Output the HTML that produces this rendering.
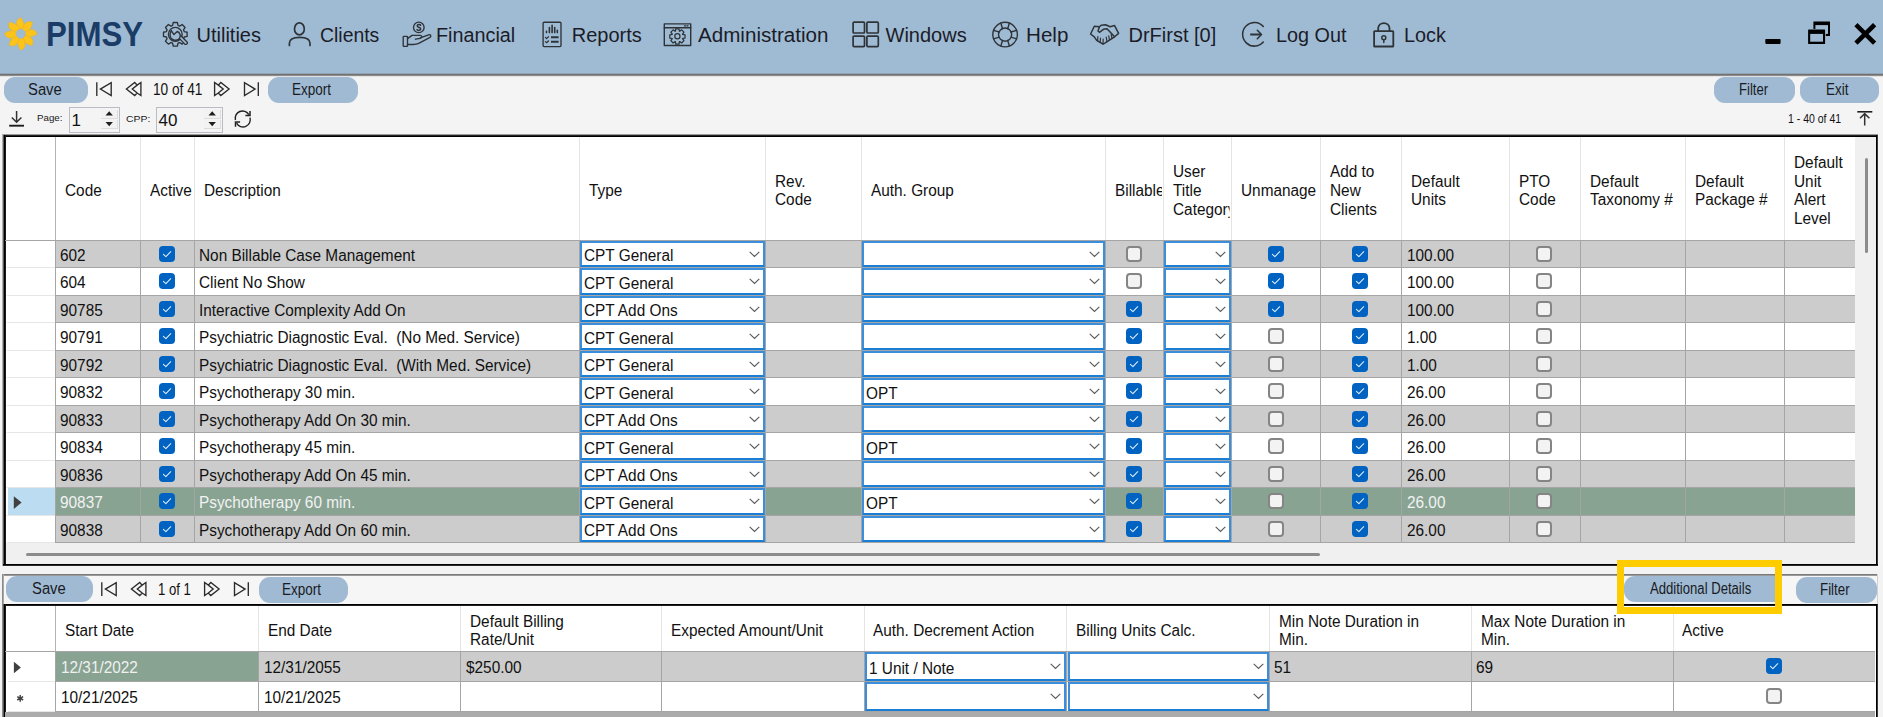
<!DOCTYPE html><html><head><meta charset="utf-8"><style>
html,body{margin:0;padding:0;}
body{width:1883px;height:717px;overflow:hidden;position:relative;background:#f4f4f4;font-family:"Liberation Sans",sans-serif;color:#000;}
div{position:absolute;box-sizing:border-box;}
.t{white-space:pre;}
</style></head><body>
<div style="left:0px;top:0px;width:1883px;height:74px;background:#9fbbd3"></div>
<div style="left:0px;top:73px;width:1883px;height:1px;background:#93a6b8"></div>
<div style="left:0px;top:74px;width:1883px;height:1px;background:#717171"></div>
<div style="left:0px;top:75px;width:1883px;height:1px;background:#8c8c8c"></div>
<div style="left:0px;top:76px;width:1883px;height:1px;background:#e2e2e2"></div>
<svg style="position:absolute;left:0px;top:14px;overflow:visible" width="42" height="40" viewBox="0 14 42 40"><g transform="translate(20.8,33.8)" fill="#fcc31b" stroke="#dcae3a" stroke-width="0.45" stroke-linejoin="round"><path d="M0.3,-16.4 C2.4,-13.4 3.9,-9.2 3.7,-4.6 L-1.9,-4.4 C-4.2,-7.2 -4.9,-10.6 -4.1,-12.6 C-3.2,-14.6 -1.4,-15.8 0.3,-16.4 Z" transform="rotate(0)"/><path d="M0.3,-16.4 C2.4,-13.4 3.9,-9.2 3.7,-4.6 L-1.9,-4.4 C-4.2,-7.2 -4.9,-10.6 -4.1,-12.6 C-3.2,-14.6 -1.4,-15.8 0.3,-16.4 Z" transform="rotate(45)"/><path d="M0.3,-16.4 C2.4,-13.4 3.9,-9.2 3.7,-4.6 L-1.9,-4.4 C-4.2,-7.2 -4.9,-10.6 -4.1,-12.6 C-3.2,-14.6 -1.4,-15.8 0.3,-16.4 Z" transform="rotate(90)"/><path d="M0.3,-16.4 C2.4,-13.4 3.9,-9.2 3.7,-4.6 L-1.9,-4.4 C-4.2,-7.2 -4.9,-10.6 -4.1,-12.6 C-3.2,-14.6 -1.4,-15.8 0.3,-16.4 Z" transform="rotate(135)"/><path d="M0.3,-16.4 C2.4,-13.4 3.9,-9.2 3.7,-4.6 L-1.9,-4.4 C-4.2,-7.2 -4.9,-10.6 -4.1,-12.6 C-3.2,-14.6 -1.4,-15.8 0.3,-16.4 Z" transform="rotate(180)"/><path d="M0.3,-16.4 C2.4,-13.4 3.9,-9.2 3.7,-4.6 L-1.9,-4.4 C-4.2,-7.2 -4.9,-10.6 -4.1,-12.6 C-3.2,-14.6 -1.4,-15.8 0.3,-16.4 Z" transform="rotate(225)"/><path d="M0.3,-16.4 C2.4,-13.4 3.9,-9.2 3.7,-4.6 L-1.9,-4.4 C-4.2,-7.2 -4.9,-10.6 -4.1,-12.6 C-3.2,-14.6 -1.4,-15.8 0.3,-16.4 Z" transform="rotate(270)"/><path d="M0.3,-16.4 C2.4,-13.4 3.9,-9.2 3.7,-4.6 L-1.9,-4.4 C-4.2,-7.2 -4.9,-10.6 -4.1,-12.6 C-3.2,-14.6 -1.4,-15.8 0.3,-16.4 Z" transform="rotate(315)"/></g><circle cx="20.8" cy="33.8" r="4.6" fill="#9fbbd3"/></svg>
<div class="t" style="left:45.5px;top:16.80px;font-size:34.5px;line-height:34.5px;font-weight:bold;color:#1b3c66;transform:scaleX(0.905);transform-origin:0 0">PIMSY</div>
<div class="t" style="left:196.5px;top:25.37px;font-size:20px;line-height:20px;color:#1c1c28;transform:scaleX(1.0);transform-origin:0 0">Utilities</div>
<div class="t" style="left:319.5px;top:25.37px;font-size:20px;line-height:20px;color:#1c1c28;transform:scaleX(0.97);transform-origin:0 0">Clients</div>
<div class="t" style="left:436.4px;top:25.37px;font-size:20px;line-height:20px;color:#1c1c28;transform:scaleX(0.99);transform-origin:0 0">Financial</div>
<div class="t" style="left:571.8px;top:25.37px;font-size:20px;line-height:20px;color:#1c1c28;transform:scaleX(1.0);transform-origin:0 0">Reports</div>
<div class="t" style="left:698.2px;top:25.37px;font-size:20px;line-height:20px;color:#1c1c28;transform:scaleX(1.03);transform-origin:0 0">Administration</div>
<div class="t" style="left:885.5px;top:25.37px;font-size:20px;line-height:20px;color:#1c1c28;transform:scaleX(1.0);transform-origin:0 0">Windows</div>
<div class="t" style="left:1025.5px;top:25.37px;font-size:20px;line-height:20px;color:#1c1c28;transform:scaleX(1.03);transform-origin:0 0">Help</div>
<div class="t" style="left:1128.5px;top:25.37px;font-size:20px;line-height:20px;color:#1c1c28;transform:scaleX(1.0);transform-origin:0 0">DrFirst [0]</div>
<div class="t" style="left:1275.5px;top:25.37px;font-size:20px;line-height:20px;color:#1c1c28;transform:scaleX(0.99);transform-origin:0 0">Log Out</div>
<div class="t" style="left:1404px;top:25.37px;font-size:20px;line-height:20px;color:#1c1c28;transform:scaleX(0.99);transform-origin:0 0">Lock</div>
<svg style="position:absolute;left:160px;top:20px;overflow:visible" width="32" height="30" viewBox="160 20 32 30"><g fill="none" stroke="#2e3338" stroke-linecap="round" stroke-linejoin="round" stroke-width="1.35"><path d="M172.58,25.41 L173.22,22.48 L177.38,22.48 L178.02,25.41 L179.67,26.09 L182.18,24.47 L185.13,27.42 L183.51,29.93 L184.19,31.58 L187.12,32.22 L187.12,36.38 L184.19,37.02 L183.51,38.67 L185.13,41.18 L182.18,44.13 L179.67,42.51 L178.02,43.19 L177.38,46.12 L173.22,46.12 L172.58,43.19 L170.93,42.51 L168.42,44.13 L165.47,41.18 L167.09,38.67 L166.41,37.02 L163.48,36.38 L163.48,32.22 L166.41,31.58 L167.09,29.93 L165.47,27.42 L168.42,24.47 L170.93,26.09 Z"/><circle cx="175.3" cy="34.3" r="6.9"/><path d="M178.6,37.6 L184.6,43.9 C185.4,44.7 186.9,44.6 187.3,43.6 C187.6,42.9 187.3,42.2 186.8,41.7 L180.6,35.5" fill="#9fbbd3"/><path d="M171.3,30.6 L173.9,34.6 L177.3,31.4 C179.6,32.8 180.6,35.2 180,37.1 C179.2,39.4 176.8,40.5 174.5,40.1 C171.8,39.6 169.9,37.2 170.1,34.5 C170.2,32.9 170.6,31.7 171.3,30.6 Z" fill="#9fbbd3"/></g></svg>
<svg style="position:absolute;left:284px;top:18px;overflow:visible" width="32" height="32" viewBox="284 18 32 32"><g fill="none" stroke="#2e3338" stroke-linecap="round" stroke-linejoin="round" stroke-width="1.7"><ellipse cx="299.4" cy="28.9" rx="4.9" ry="6"/><path d="M289.4,45.5 V43.3 C289.4,39.6 293.5,37.4 299.7,37.4 C305.9,37.4 310,39.6 310,43.3 V45.5"/></g></svg>
<svg style="position:absolute;left:398px;top:16px;overflow:visible" width="38" height="36" viewBox="398 16 38 36"><g fill="none" stroke="#2e3338" stroke-linecap="round" stroke-linejoin="round" stroke-width="1.35"><circle cx="418.8" cy="27.4" r="5.3"/><path d="M420.6,25.3 C420.2,24.2 417.4,24.2 417.2,25.9 C417,27.4 420.7,27.2 420.7,29 C420.7,30.6 417.7,30.8 417,29.6" stroke-width="1.5"/><rect x="403.2" y="36.4" width="4.3" height="9.9" rx="0.6"/><path d="M407.5,38.6 L412,35.4 H420.3 C422.2,35.6 422.2,38 420.3,38.3 L415.4,39.2 M420.2,37.8 L428.6,34.8 C430.8,34.1 431.6,36.5 430,37.4 L419.2,43.2 C417.2,44.2 415.1,44.5 413,44.5 H407.5"/></g></svg>
<svg style="position:absolute;left:538px;top:18px;overflow:visible" width="28" height="32" viewBox="538 18 28 32"><g fill="none" stroke="#2e3338" stroke-linecap="round" stroke-linejoin="round" stroke-width="1.35"><rect x="543.1" y="22.2" width="17.9" height="24.4" rx="1"/><path d="M546.5,31.3 V32.6 M549.4,27.6 V32.6 M552.1,25.3 V32.6 M554.7,27.6 V32.6 M557.3,30.2 V32.6" stroke-width="1.6"/><path d="M545.4,37.4 L546.6,38.5 L548.6,36.6 M545.4,41.6 L546.6,42.7 L548.6,40.8" stroke-width="1.2"/><path d="M551,37.3 H558.6 M551,41.8 H558.6" stroke-width="2" stroke-linecap="butt"/></g></svg>
<svg style="position:absolute;left:660px;top:18px;overflow:visible" width="36" height="32" viewBox="660 18 36 32"><g fill="none" stroke="#2e3338" stroke-linecap="round" stroke-linejoin="round" stroke-width="1.4" stroke-linecap="butt" stroke-linejoin="miter"><rect x="664.3" y="23.9" width="26.4" height="21.6"/><path d="M664.3,27.7 H690.7"/><path d="M684.3,25.8 H685.6 M686.8,25.8 H688.1" stroke-width="1.2"/></g><g fill="none" stroke="#2e3338" stroke-linecap="round" stroke-linejoin="round" stroke-width="1.25"><path d="M675.39,31.17 L675.78,28.77 L679.02,28.77 L679.41,31.17 L679.68,31.28 L681.65,29.86 L683.94,32.15 L682.52,34.12 L682.63,34.39 L685.03,34.78 L685.03,38.02 L682.63,38.41 L682.52,38.68 L683.94,40.65 L681.65,42.94 L679.68,41.52 L679.41,41.63 L679.02,44.03 L675.78,44.03 L675.39,41.63 L675.12,41.52 L673.15,42.94 L670.86,40.65 L672.28,38.68 L672.17,38.41 L669.77,38.02 L669.77,34.78 L672.17,34.39 L672.28,34.12 L670.86,32.15 L673.15,29.86 L675.12,31.28 Z"/><circle cx="677.4" cy="36.3" r="2.6"/></g></svg>
<svg style="position:absolute;left:848px;top:18px;overflow:visible" width="36" height="32" viewBox="848 18 36 32"><g fill="none" stroke="#2e3338" stroke-linecap="round" stroke-linejoin="round" stroke-width="1.7"><rect x="853.1" y="22.2" width="11.4" height="10.8" rx="1"/><rect x="866.9" y="22.2" width="11.4" height="10.8" rx="1"/><rect x="853.1" y="36.1" width="11.4" height="10.5" rx="1"/><rect x="866.9" y="36.1" width="11.4" height="10.5" rx="1"/></g></svg>
<svg style="position:absolute;left:986px;top:16px;overflow:visible" width="38" height="36" viewBox="986 16 38 36"><g fill="none" stroke="#2e3338" stroke-linecap="round" stroke-linejoin="round" stroke-width="1.4"><circle cx="1005.1" cy="34.6" r="12.3"/><circle cx="1005.1" cy="34.6" r="6.6"/><path d="M1002.50,28.75 L1000.81,23.07 M1007.70,28.75 L1009.39,23.07 M1010.95,32.00 L1016.63,30.31 M1010.95,37.20 L1016.63,38.89 M1007.70,40.45 L1009.39,46.13 M1002.50,40.45 L1000.81,46.13 M999.25,37.20 L993.57,38.89 M999.25,32.00 L993.57,30.31 "/></g></svg>
<svg style="position:absolute;left:1086px;top:18px;overflow:visible" width="38" height="32" viewBox="1086 18 38 32"><g fill="none" stroke="#2e3338" stroke-linecap="round" stroke-linejoin="round" stroke-width="1.5"><path d="M1090.6,34 L1094.3,26.3 L1099.4,26.8 L1101.2,25.2 L1105.6,24.8 L1110.1,26.7 L1114.6,25.6 L1118.6,33.4 L1114.6,36.8 L1104.8,43.1 L1103,44.2 L1096.7,40.3 L1094.3,36.8 Z"/><path d="M1099.4,26.8 L1098,31 L1099.4,32.3 L1103.4,29.3 L1107,28.8 L1114.6,36.8"/><path d="M1106.2,37.2 L1107,41.6 M1108.7,35.8 L1109.5,40 M1111.2,34.4 L1112,38.4 M1097.9,36.6 L1097.6,40.8 M1100.5,38.2 L1100.2,42.4 M1103.2,39.2 L1103,43.6" stroke-width="1.2"/></g></svg>
<svg style="position:absolute;left:1238px;top:16px;overflow:visible" width="34" height="36" viewBox="1238 16 34 36"><g fill="none" stroke="#2e3338" stroke-linecap="round" stroke-linejoin="round" stroke-width="1.55"><path d="M1263.3,26.5 A11.8,11.8 0 1 0 1263.3,42.1"/><path d="M1250.2,34.5 H1261" stroke-width="2" stroke-linecap="butt"/><path d="M1257.3,30.3 L1261.5,34.5 L1257.3,38.8"/></g></svg>
<svg style="position:absolute;left:1368px;top:16px;overflow:visible" width="32" height="36" viewBox="1368 16 32 36"><g fill="none" stroke="#2e3338" stroke-linecap="round" stroke-linejoin="round" stroke-width="1.8" stroke-linejoin="miter"><rect x="1374.1" y="31.2" width="19.2" height="15.3" rx="0.6"/><path d="M1378.2,31.2 V28 A5.7,5.7 0 0 1 1389.5,28 V31.2"/><circle cx="1383.8" cy="37.7" r="2" stroke-width="1.5"/><path d="M1383.8,40.2 V42.4" stroke-width="1.5"/></g></svg>
<svg style="position:absolute;left:1758px;top:16px;overflow:visible" width="125" height="36" viewBox="1758 16 125 36"><rect x="1765.3" y="38.9" width="15.3" height="5" rx="0.8" fill="#000"/><rect x="1813.4" y="21.6" width="16.6" height="14.3" rx="0.5" fill="#000"/><rect x="1815.4" y="25.1" width="12.6" height="8.8" fill="#9fbbd3"/><rect x="1807.2" y="28.9" width="18.6" height="15.6" fill="#9fbbd3"/><rect x="1808.1" y="29.6" width="17" height="14.3" rx="0.5" fill="#000"/><rect x="1810.2" y="33.9" width="12.8" height="7.8" fill="#9fbbd3"/><path d="M1857.6,26.3 L1873,41.6 M1873,26.3 L1857.6,41.6" stroke="#000" stroke-width="4.6" stroke-linecap="square"/></svg>
<div style="left:4px;top:77px;width:84px;height:26px;background:#9fbad2;border-radius:11px"></div>
<div class="t" style="left:28.3px;top:82.46px;font-size:16px;line-height:16px;color:#1a1a24;transform:scaleX(0.926);transform-origin:0 0">Save</div>
<div style="left:268px;top:77px;width:90px;height:26px;background:#9fbad2;border-radius:11px"></div>
<div class="t" style="left:291.6px;top:82.46px;font-size:16px;line-height:16px;color:#1a1a24;transform:scaleX(0.843);transform-origin:0 0">Export</div>
<div style="left:1714px;top:77px;width:81px;height:26px;background:#9fbad2;border-radius:11px"></div>
<div class="t" style="left:1739.3px;top:82.46px;font-size:16px;line-height:16px;color:#1a1a24;transform:scaleX(0.82);transform-origin:0 0">Filter</div>
<div style="left:1800px;top:77px;width:79px;height:26px;background:#9fbad2;border-radius:11px"></div>
<div class="t" style="left:1826.2px;top:82.46px;font-size:16px;line-height:16px;color:#1a1a24;transform:scaleX(0.84);transform-origin:0 0">Exit</div>
<svg style="position:absolute;left:90px;top:78px;overflow:visible" width="60" height="22" viewBox="90 78 60 22"><g fill="none" stroke="#2b2b2b" stroke-width="1.35" stroke-linejoin="miter" transform="translate(0,0)"><path d="M96.8,82.3 V95.9"/><path d="M111.2,82.7 V95.6 L100.4,89.1 Z"/><path d="M126.4,89 L134.7,82.5 L137.2,85.1 L140.9,82.5 V95.5 L137.2,93 L134.7,95.5 Z M137.2,85.1 L132.3,89 L137.2,93"/></g></svg>
<svg style="position:absolute;left:208px;top:78px;overflow:visible" width="56" height="22" viewBox="208 78 56 22"><g fill="none" stroke="#2b2b2b" stroke-width="1.35" stroke-linejoin="miter" transform="translate(0,0)"><path d="M229.1,89 L220.8,82.5 L218.3,85.1 L214.6,82.5 V95.5 L218.3,93 L220.8,95.5 Z M218.3,85.1 L223.2,89 L218.3,93"/><path d="M244.5,82.7 V95.6 L255.1,89.1 Z"/><path d="M258.3,82.3 V95.9"/></g></svg>
<div class="t" style="left:152.8px;top:82.36px;font-size:16px;line-height:16px;transform:scaleX(0.854);transform-origin:0 0;color:#111">10 of 41</div>
<svg style="position:absolute;left:0px;top:104px;overflow:visible" width="30" height="30" viewBox="0 104 30 30"><g fill="none" stroke="#1e1e1e" stroke-width="1.5"><path d="M16.6,111 V122.3 M11.8,117.4 L16.6,122.3 L21.4,117.4" stroke="#333"/><path d="M9.2,125.7 H24" stroke-width="1.9"/></g></svg>
<div class="t" style="left:37.4px;top:113.68px;font-size:9px;line-height:9px;color:#1a1a1a;transform:scaleX(1.08);transform-origin:0 0">Page:</div>
<div style="left:69px;top:107px;width:51px;height:26px;background:#f4f4f4;border:1px solid #b9bdc3"></div>
<div style="left:101px;top:109.5px;width:17px;height:9px;background:#f2f2f2;border-right:1px solid #dcdcdc;border-bottom:1px solid #dcdcdc"></div>
<div style="left:101px;top:119.5px;width:17px;height:9.5px;background:#f2f2f2;border-right:1px solid #dcdcdc;border-bottom:1px solid #dcdcdc"></div>
<svg style="position:absolute;left:101px;top:107px;overflow:visible" width="17" height="26" viewBox="101 107 17 26"><path d="M105.5,115.5 L109.2,111.3 L112.9,115.5 Z M105.5,122 L109.2,126.2 L112.9,122 Z" fill="#1e1e1e"/></svg>
<div class="t" style="left:71.5px;top:111.61px;font-size:17px;line-height:17px;color:#111">1</div>
<div class="t" style="left:126.3px;top:113.86px;font-size:9.5px;line-height:9.5px;color:#1a1a1a;transform:scaleX(1.1);transform-origin:0 0">CPP:</div>
<div style="left:156px;top:107px;width:67px;height:26px;background:#f4f4f4;border:1px solid #b9bdc3"></div>
<div style="left:204px;top:109.5px;width:17px;height:9px;background:#f2f2f2;border-right:1px solid #dcdcdc;border-bottom:1px solid #dcdcdc"></div>
<div style="left:204px;top:119.5px;width:17px;height:9.5px;background:#f2f2f2;border-right:1px solid #dcdcdc;border-bottom:1px solid #dcdcdc"></div>
<svg style="position:absolute;left:204px;top:107px;overflow:visible" width="17" height="26" viewBox="204 107 17 26"><path d="M208.5,115.5 L212.2,111.3 L215.9,115.5 Z M208.5,122 L212.2,126.2 L215.9,122 Z" fill="#1e1e1e"/></svg>
<div class="t" style="left:158.5px;top:111.61px;font-size:17px;line-height:17px;color:#111">40</div>
<svg style="position:absolute;left:230px;top:106px;overflow:visible" width="26" height="26" viewBox="230 106 26 26"><g fill="none" stroke="#222" stroke-width="1.4"><path d="M235.4,120 A7.3,7.3 0 0 1 248.8,114.6 M250,117.6 A7.3,7.3 0 0 1 236.6,123.2"/><path d="M250,110.9 V115.6 H245.4 M235.5,126.8 V122.1 H240.1" stroke-width="1.5"/></g></svg>
<div class="t" style="left:1787.9px;top:113.24px;font-size:12px;line-height:12px;color:#111;transform:scaleX(0.875);transform-origin:0 0">1 - 40 of 41</div>
<svg style="position:absolute;left:1850px;top:104px;overflow:visible" width="30" height="28" viewBox="1850 104 30 28"><g fill="none" stroke="#1e1e1e" stroke-width="1.5"><path d="M1857.3,111.8 H1872.3" stroke-width="1.6"/><path d="M1864.7,114 V125.6 M1860,118.3 L1864.7,113.6 L1869.4,118.3" stroke="#333"/></g></svg>
<div style="left:2px;top:134px;width:1876px;height:1px;background:#9a9a9a"></div>
<div style="left:2px;top:134px;width:1px;height:432px;background:#b0b0b0"></div>
<div style="left:3px;top:135px;width:1875px;height:1px;background:#222"></div>
<div style="left:3px;top:136px;width:1875px;height:1px;background:#000"></div>
<div style="left:3px;top:135px;width:1px;height:431px;background:#5a5a5a"></div>
<div style="left:4px;top:135px;width:1px;height:431px;background:#000"></div>
<div style="left:5px;top:135px;width:1px;height:431px;background:#1a1a1a"></div>
<div style="left:1876px;top:135px;width:1px;height:431px;background:#000"></div>
<div style="left:1877px;top:135px;width:1px;height:431px;background:#3a3a3a"></div>
<div style="left:3px;top:564px;width:1875px;height:1px;background:#000"></div>
<div style="left:3px;top:565px;width:1875px;height:1px;background:#2a2a2a"></div>
<div style="left:6px;top:137px;width:1870px;height:427px;background:#f0f0f0"></div>
<div style="left:6px;top:137px;width:1849px;height:103px;background:#fff"></div>
<div style="left:55px;top:137px;width:1px;height:103px;background:#b4b4b4"></div>
<div style="left:140px;top:137px;width:1px;height:103px;background:#e4e4e4"></div>
<div style="left:194px;top:137px;width:1px;height:103px;background:#e4e4e4"></div>
<div style="left:579px;top:137px;width:1px;height:103px;background:#e4e4e4"></div>
<div style="left:765px;top:137px;width:1px;height:103px;background:#e4e4e4"></div>
<div style="left:861px;top:137px;width:1px;height:103px;background:#e4e4e4"></div>
<div style="left:1105px;top:137px;width:1px;height:103px;background:#e4e4e4"></div>
<div style="left:1163px;top:137px;width:1px;height:103px;background:#e4e4e4"></div>
<div style="left:1231px;top:137px;width:1px;height:103px;background:#e4e4e4"></div>
<div style="left:1320px;top:137px;width:1px;height:103px;background:#e4e4e4"></div>
<div style="left:1401px;top:137px;width:1px;height:103px;background:#e4e4e4"></div>
<div style="left:1509px;top:137px;width:1px;height:103px;background:#e4e4e4"></div>
<div style="left:1580px;top:137px;width:1px;height:103px;background:#e4e4e4"></div>
<div style="left:1685px;top:137px;width:1px;height:103px;background:#e4e4e4"></div>
<div style="left:1784px;top:137px;width:1px;height:103px;background:#e4e4e4"></div>
<div style="left:5px;top:240px;width:1850px;height:1px;background:#a5a5a5"></div>
<div class="t" style="left:65px;top:180.85px;width:77.08333333333334px;height:19px;overflow:hidden;font-size:16px;line-height:19px;color:#111;transform:scaleX(0.96);transform-origin:0 0">Code</div>
<div class="t" style="left:150px;top:180.85px;width:44.79166666666667px;height:19px;overflow:hidden;font-size:16px;line-height:19px;color:#111;transform:scaleX(0.96);transform-origin:0 0">Active</div>
<div class="t" style="left:204px;top:180.85px;width:389.58333333333337px;height:19px;overflow:hidden;font-size:16px;line-height:19px;color:#111;transform:scaleX(0.96);transform-origin:0 0">Description</div>
<div class="t" style="left:589px;top:180.85px;width:182.29166666666669px;height:19px;overflow:hidden;font-size:16px;line-height:19px;color:#111;transform:scaleX(0.96);transform-origin:0 0">Type</div>
<div class="t" style="left:775px;top:171.53px;width:88.54166666666667px;height:19px;overflow:hidden;font-size:16px;line-height:19px;color:#111;transform:scaleX(0.96);transform-origin:0 0">Rev.</div>
<div class="t" style="left:775px;top:190.18px;width:88.54166666666667px;height:19px;overflow:hidden;font-size:16px;line-height:19px;color:#111;transform:scaleX(0.96);transform-origin:0 0">Code</div>
<div class="t" style="left:871px;top:180.85px;width:242.70833333333334px;height:19px;overflow:hidden;font-size:16px;line-height:19px;color:#111;transform:scaleX(0.96);transform-origin:0 0">Auth. Group</div>
<div class="t" style="left:1115px;top:180.85px;width:48.958333333333336px;height:19px;overflow:hidden;font-size:16px;line-height:19px;color:#111;transform:scaleX(0.96);transform-origin:0 0">Billable</div>
<div class="t" style="left:1173px;top:162.20px;width:59.375px;height:19px;overflow:hidden;font-size:16px;line-height:19px;color:#111;transform:scaleX(0.96);transform-origin:0 0">User</div>
<div class="t" style="left:1173px;top:180.85px;width:59.375px;height:19px;overflow:hidden;font-size:16px;line-height:19px;color:#111;transform:scaleX(0.96);transform-origin:0 0">Title</div>
<div class="t" style="left:1173px;top:199.50px;width:59.375px;height:19px;overflow:hidden;font-size:16px;line-height:19px;color:#111;transform:scaleX(0.96);transform-origin:0 0">Category</div>
<div class="t" style="left:1241px;top:180.85px;width:81.25px;height:19px;overflow:hidden;font-size:16px;line-height:19px;color:#111;transform:scaleX(0.96);transform-origin:0 0">Unmanage</div>
<div class="t" style="left:1330px;top:162.20px;width:72.91666666666667px;height:19px;overflow:hidden;font-size:16px;line-height:19px;color:#111;transform:scaleX(0.96);transform-origin:0 0">Add to</div>
<div class="t" style="left:1330px;top:180.85px;width:72.91666666666667px;height:19px;overflow:hidden;font-size:16px;line-height:19px;color:#111;transform:scaleX(0.96);transform-origin:0 0">New</div>
<div class="t" style="left:1330px;top:199.50px;width:72.91666666666667px;height:19px;overflow:hidden;font-size:16px;line-height:19px;color:#111;transform:scaleX(0.96);transform-origin:0 0">Clients</div>
<div class="t" style="left:1411px;top:171.53px;width:101.04166666666667px;height:19px;overflow:hidden;font-size:16px;line-height:19px;color:#111;transform:scaleX(0.96);transform-origin:0 0">Default</div>
<div class="t" style="left:1411px;top:190.18px;width:101.04166666666667px;height:19px;overflow:hidden;font-size:16px;line-height:19px;color:#111;transform:scaleX(0.96);transform-origin:0 0">Units</div>
<div class="t" style="left:1519px;top:171.53px;width:62.5px;height:19px;overflow:hidden;font-size:16px;line-height:19px;color:#111;transform:scaleX(0.96);transform-origin:0 0">PTO</div>
<div class="t" style="left:1519px;top:190.18px;width:62.5px;height:19px;overflow:hidden;font-size:16px;line-height:19px;color:#111;transform:scaleX(0.96);transform-origin:0 0">Code</div>
<div class="t" style="left:1590px;top:171.53px;width:97.91666666666667px;height:19px;overflow:hidden;font-size:16px;line-height:19px;color:#111;transform:scaleX(0.96);transform-origin:0 0">Default</div>
<div class="t" style="left:1590px;top:190.18px;width:97.91666666666667px;height:19px;overflow:hidden;font-size:16px;line-height:19px;color:#111;transform:scaleX(0.96);transform-origin:0 0">Taxonomy #</div>
<div class="t" style="left:1695px;top:171.53px;width:91.66666666666667px;height:19px;overflow:hidden;font-size:16px;line-height:19px;color:#111;transform:scaleX(0.96);transform-origin:0 0">Default</div>
<div class="t" style="left:1695px;top:190.18px;width:91.66666666666667px;height:19px;overflow:hidden;font-size:16px;line-height:19px;color:#111;transform:scaleX(0.96);transform-origin:0 0">Package #</div>
<div class="t" style="left:1794px;top:152.88px;width:62.5px;height:19px;overflow:hidden;font-size:16px;line-height:19px;color:#111;transform:scaleX(0.96);transform-origin:0 0">Default</div>
<div class="t" style="left:1794px;top:171.53px;width:62.5px;height:19px;overflow:hidden;font-size:16px;line-height:19px;color:#111;transform:scaleX(0.96);transform-origin:0 0">Unit</div>
<div class="t" style="left:1794px;top:190.18px;width:62.5px;height:19px;overflow:hidden;font-size:16px;line-height:19px;color:#111;transform:scaleX(0.96);transform-origin:0 0">Alert</div>
<div class="t" style="left:1794px;top:208.82px;width:62.5px;height:19px;overflow:hidden;font-size:16px;line-height:19px;color:#111;transform:scaleX(0.96);transform-origin:0 0">Level</div>
<div style="left:1864.5px;top:158px;width:3px;height:95px;background:#8c8c8c;border-radius:1.5px"></div>
<div style="left:6px;top:241px;width:49px;height:26px;background:#fff"></div>
<div style="left:8px;top:267px;width:47px;height:1px;background:#e6e6e6"></div>
<div style="left:56px;top:241px;width:1799px;height:26px;background:#cccccc"></div>
<div style="left:55px;top:267px;width:1800px;height:1px;background:#a5a5a5"></div>
<div style="left:55px;top:240px;width:1px;height:28px;background:#a5a5a5"></div>
<div style="left:140px;top:240px;width:1px;height:28px;background:#a5a5a5"></div>
<div style="left:194px;top:240px;width:1px;height:28px;background:#a5a5a5"></div>
<div style="left:579px;top:240px;width:1px;height:28px;background:#a5a5a5"></div>
<div style="left:765px;top:240px;width:1px;height:28px;background:#a5a5a5"></div>
<div style="left:861px;top:240px;width:1px;height:28px;background:#a5a5a5"></div>
<div style="left:1105px;top:240px;width:1px;height:28px;background:#a5a5a5"></div>
<div style="left:1163px;top:240px;width:1px;height:28px;background:#a5a5a5"></div>
<div style="left:1231px;top:240px;width:1px;height:28px;background:#a5a5a5"></div>
<div style="left:1320px;top:240px;width:1px;height:28px;background:#a5a5a5"></div>
<div style="left:1401px;top:240px;width:1px;height:28px;background:#a5a5a5"></div>
<div style="left:1509px;top:240px;width:1px;height:28px;background:#a5a5a5"></div>
<div style="left:1580px;top:240px;width:1px;height:28px;background:#a5a5a5"></div>
<div style="left:1685px;top:240px;width:1px;height:28px;background:#a5a5a5"></div>
<div style="left:1784px;top:240px;width:1px;height:28px;background:#a5a5a5"></div>
<div class="t" style="left:60px;top:248.46px;font-size:16px;line-height:16px;transform:scaleX(0.96);transform-origin:0 0;color:#111">602</div>
<div style="left:159px;top:246px;width:16px;height:16px;background:#0063c1;border-radius:4px"></div>
<svg style="position:absolute;left:159px;top:246px;" width="16" height="16" viewBox="0 0 16 16"><path d="M4.4,8.3 L6.9,10.7 L11.7,5.7" fill="none" stroke="#e4eef9" stroke-width="1.05" stroke-linecap="round" stroke-linejoin="round"/></svg>
<div class="t" style="left:199px;top:248.46px;font-size:16px;line-height:16px;transform:scaleX(0.96);transform-origin:0 0;color:#111">Non Billable Case Management</div>
<div style="left:580px;top:241px;width:185px;height:26px;background:#fff;border:2px solid #3a8edb;border-bottom-color:#1a7fd4"></div>
<div class="t" style="left:584px;top:248.46px;font-size:16px;line-height:16px;transform:scaleX(0.96);transform-origin:0 0;color:#111">CPT General</div>
<svg style="position:absolute;left:749px;top:251.0px;" width="11" height="7" viewBox="0 0 11 7"><path d="M0.7,0.9 L5.5,5.5 L10.3,0.9" fill="none" stroke="#5c5c5c" stroke-width="1.2"/></svg>
<div style="left:862px;top:241px;width:243px;height:26px;background:#fff;border:2px solid #3a8edb;border-bottom-color:#1a7fd4"></div>
<svg style="position:absolute;left:1089px;top:251.0px;" width="11" height="7" viewBox="0 0 11 7"><path d="M0.7,0.9 L5.5,5.5 L10.3,0.9" fill="none" stroke="#5c5c5c" stroke-width="1.2"/></svg>
<div style="left:1126px;top:246px;width:16px;height:16px;background:#f3f3f3;border:2px solid #858585;border-radius:4px"></div>
<div style="left:1164px;top:241px;width:67px;height:26px;background:#fff;border:2px solid #3a8edb;border-bottom-color:#1a7fd4"></div>
<svg style="position:absolute;left:1215px;top:251.0px;" width="11" height="7" viewBox="0 0 11 7"><path d="M0.7,0.9 L5.5,5.5 L10.3,0.9" fill="none" stroke="#5c5c5c" stroke-width="1.2"/></svg>
<div style="left:1268px;top:246px;width:16px;height:16px;background:#0063c1;border-radius:4px"></div>
<svg style="position:absolute;left:1268px;top:246px;" width="16" height="16" viewBox="0 0 16 16"><path d="M4.4,8.3 L6.9,10.7 L11.7,5.7" fill="none" stroke="#e4eef9" stroke-width="1.05" stroke-linecap="round" stroke-linejoin="round"/></svg>
<div style="left:1352px;top:246px;width:16px;height:16px;background:#0063c1;border-radius:4px"></div>
<svg style="position:absolute;left:1352px;top:246px;" width="16" height="16" viewBox="0 0 16 16"><path d="M4.4,8.3 L6.9,10.7 L11.7,5.7" fill="none" stroke="#e4eef9" stroke-width="1.05" stroke-linecap="round" stroke-linejoin="round"/></svg>
<div class="t" style="left:1407px;top:248.46px;font-size:16px;line-height:16px;transform:scaleX(0.96);transform-origin:0 0;color:#111">100.00</div>
<div style="left:1536px;top:246px;width:16px;height:16px;background:#f3f3f3;border:2px solid #858585;border-radius:4px"></div>
<div style="left:6px;top:268px;width:49px;height:27px;background:#fff"></div>
<div style="left:8px;top:295px;width:47px;height:1px;background:#e6e6e6"></div>
<div style="left:56px;top:268px;width:1799px;height:27px;background:#ffffff"></div>
<div style="left:55px;top:295px;width:1800px;height:1px;background:#a5a5a5"></div>
<div style="left:55px;top:267px;width:1px;height:29px;background:#a5a5a5"></div>
<div style="left:140px;top:267px;width:1px;height:29px;background:#a5a5a5"></div>
<div style="left:194px;top:267px;width:1px;height:29px;background:#a5a5a5"></div>
<div style="left:579px;top:267px;width:1px;height:29px;background:#a5a5a5"></div>
<div style="left:765px;top:267px;width:1px;height:29px;background:#a5a5a5"></div>
<div style="left:861px;top:267px;width:1px;height:29px;background:#a5a5a5"></div>
<div style="left:1105px;top:267px;width:1px;height:29px;background:#a5a5a5"></div>
<div style="left:1163px;top:267px;width:1px;height:29px;background:#a5a5a5"></div>
<div style="left:1231px;top:267px;width:1px;height:29px;background:#a5a5a5"></div>
<div style="left:1320px;top:267px;width:1px;height:29px;background:#a5a5a5"></div>
<div style="left:1401px;top:267px;width:1px;height:29px;background:#a5a5a5"></div>
<div style="left:1509px;top:267px;width:1px;height:29px;background:#a5a5a5"></div>
<div style="left:1580px;top:267px;width:1px;height:29px;background:#a5a5a5"></div>
<div style="left:1685px;top:267px;width:1px;height:29px;background:#a5a5a5"></div>
<div style="left:1784px;top:267px;width:1px;height:29px;background:#a5a5a5"></div>
<div class="t" style="left:60px;top:275.46px;font-size:16px;line-height:16px;transform:scaleX(0.96);transform-origin:0 0;color:#111">604</div>
<div style="left:159px;top:273px;width:16px;height:16px;background:#0063c1;border-radius:4px"></div>
<svg style="position:absolute;left:159px;top:273px;" width="16" height="16" viewBox="0 0 16 16"><path d="M4.4,8.3 L6.9,10.7 L11.7,5.7" fill="none" stroke="#e4eef9" stroke-width="1.05" stroke-linecap="round" stroke-linejoin="round"/></svg>
<div class="t" style="left:199px;top:275.46px;font-size:16px;line-height:16px;transform:scaleX(0.96);transform-origin:0 0;color:#111">Client No Show</div>
<div style="left:580px;top:268px;width:185px;height:27px;background:#fff;border:2px solid #3a8edb;border-bottom-color:#1a7fd4"></div>
<div class="t" style="left:584px;top:275.96px;font-size:16px;line-height:16px;transform:scaleX(0.96);transform-origin:0 0;color:#111">CPT General</div>
<svg style="position:absolute;left:749px;top:278.42px;" width="11" height="7" viewBox="0 0 11 7"><path d="M0.7,0.9 L5.5,5.5 L10.3,0.9" fill="none" stroke="#5c5c5c" stroke-width="1.2"/></svg>
<div style="left:862px;top:268px;width:243px;height:27px;background:#fff;border:2px solid #3a8edb;border-bottom-color:#1a7fd4"></div>
<svg style="position:absolute;left:1089px;top:278.42px;" width="11" height="7" viewBox="0 0 11 7"><path d="M0.7,0.9 L5.5,5.5 L10.3,0.9" fill="none" stroke="#5c5c5c" stroke-width="1.2"/></svg>
<div style="left:1126px;top:273px;width:16px;height:16px;background:#f3f3f3;border:2px solid #858585;border-radius:4px"></div>
<div style="left:1164px;top:268px;width:67px;height:27px;background:#fff;border:2px solid #3a8edb;border-bottom-color:#1a7fd4"></div>
<svg style="position:absolute;left:1215px;top:278.42px;" width="11" height="7" viewBox="0 0 11 7"><path d="M0.7,0.9 L5.5,5.5 L10.3,0.9" fill="none" stroke="#5c5c5c" stroke-width="1.2"/></svg>
<div style="left:1268px;top:273px;width:16px;height:16px;background:#0063c1;border-radius:4px"></div>
<svg style="position:absolute;left:1268px;top:273px;" width="16" height="16" viewBox="0 0 16 16"><path d="M4.4,8.3 L6.9,10.7 L11.7,5.7" fill="none" stroke="#e4eef9" stroke-width="1.05" stroke-linecap="round" stroke-linejoin="round"/></svg>
<div style="left:1352px;top:273px;width:16px;height:16px;background:#0063c1;border-radius:4px"></div>
<svg style="position:absolute;left:1352px;top:273px;" width="16" height="16" viewBox="0 0 16 16"><path d="M4.4,8.3 L6.9,10.7 L11.7,5.7" fill="none" stroke="#e4eef9" stroke-width="1.05" stroke-linecap="round" stroke-linejoin="round"/></svg>
<div class="t" style="left:1407px;top:275.46px;font-size:16px;line-height:16px;transform:scaleX(0.96);transform-origin:0 0;color:#111">100.00</div>
<div style="left:1536px;top:273px;width:16px;height:16px;background:#f3f3f3;border:2px solid #858585;border-radius:4px"></div>
<div style="left:6px;top:296px;width:49px;height:26px;background:#fff"></div>
<div style="left:8px;top:322px;width:47px;height:1px;background:#e6e6e6"></div>
<div style="left:56px;top:296px;width:1799px;height:26px;background:#cccccc"></div>
<div style="left:55px;top:322px;width:1800px;height:1px;background:#a5a5a5"></div>
<div style="left:55px;top:295px;width:1px;height:28px;background:#a5a5a5"></div>
<div style="left:140px;top:295px;width:1px;height:28px;background:#a5a5a5"></div>
<div style="left:194px;top:295px;width:1px;height:28px;background:#a5a5a5"></div>
<div style="left:579px;top:295px;width:1px;height:28px;background:#a5a5a5"></div>
<div style="left:765px;top:295px;width:1px;height:28px;background:#a5a5a5"></div>
<div style="left:861px;top:295px;width:1px;height:28px;background:#a5a5a5"></div>
<div style="left:1105px;top:295px;width:1px;height:28px;background:#a5a5a5"></div>
<div style="left:1163px;top:295px;width:1px;height:28px;background:#a5a5a5"></div>
<div style="left:1231px;top:295px;width:1px;height:28px;background:#a5a5a5"></div>
<div style="left:1320px;top:295px;width:1px;height:28px;background:#a5a5a5"></div>
<div style="left:1401px;top:295px;width:1px;height:28px;background:#a5a5a5"></div>
<div style="left:1509px;top:295px;width:1px;height:28px;background:#a5a5a5"></div>
<div style="left:1580px;top:295px;width:1px;height:28px;background:#a5a5a5"></div>
<div style="left:1685px;top:295px;width:1px;height:28px;background:#a5a5a5"></div>
<div style="left:1784px;top:295px;width:1px;height:28px;background:#a5a5a5"></div>
<div class="t" style="left:60px;top:303.46px;font-size:16px;line-height:16px;transform:scaleX(0.96);transform-origin:0 0;color:#111">90785</div>
<div style="left:159px;top:301px;width:16px;height:16px;background:#0063c1;border-radius:4px"></div>
<svg style="position:absolute;left:159px;top:301px;" width="16" height="16" viewBox="0 0 16 16"><path d="M4.4,8.3 L6.9,10.7 L11.7,5.7" fill="none" stroke="#e4eef9" stroke-width="1.05" stroke-linecap="round" stroke-linejoin="round"/></svg>
<div class="t" style="left:199px;top:303.46px;font-size:16px;line-height:16px;transform:scaleX(0.96);transform-origin:0 0;color:#111">Interactive Complexity Add On</div>
<div style="left:580px;top:296px;width:185px;height:26px;background:#fff;border:2px solid #3a8edb;border-bottom-color:#1a7fd4"></div>
<div class="t" style="left:584px;top:303.46px;font-size:16px;line-height:16px;transform:scaleX(0.96);transform-origin:0 0;color:#111">CPT Add Ons</div>
<svg style="position:absolute;left:749px;top:306.0px;" width="11" height="7" viewBox="0 0 11 7"><path d="M0.7,0.9 L5.5,5.5 L10.3,0.9" fill="none" stroke="#5c5c5c" stroke-width="1.2"/></svg>
<div style="left:862px;top:296px;width:243px;height:26px;background:#fff;border:2px solid #3a8edb;border-bottom-color:#1a7fd4"></div>
<svg style="position:absolute;left:1089px;top:306.0px;" width="11" height="7" viewBox="0 0 11 7"><path d="M0.7,0.9 L5.5,5.5 L10.3,0.9" fill="none" stroke="#5c5c5c" stroke-width="1.2"/></svg>
<div style="left:1126px;top:301px;width:16px;height:16px;background:#0063c1;border-radius:4px"></div>
<svg style="position:absolute;left:1126px;top:301px;" width="16" height="16" viewBox="0 0 16 16"><path d="M4.4,8.3 L6.9,10.7 L11.7,5.7" fill="none" stroke="#e4eef9" stroke-width="1.05" stroke-linecap="round" stroke-linejoin="round"/></svg>
<div style="left:1164px;top:296px;width:67px;height:26px;background:#fff;border:2px solid #3a8edb;border-bottom-color:#1a7fd4"></div>
<svg style="position:absolute;left:1215px;top:306.0px;" width="11" height="7" viewBox="0 0 11 7"><path d="M0.7,0.9 L5.5,5.5 L10.3,0.9" fill="none" stroke="#5c5c5c" stroke-width="1.2"/></svg>
<div style="left:1268px;top:301px;width:16px;height:16px;background:#0063c1;border-radius:4px"></div>
<svg style="position:absolute;left:1268px;top:301px;" width="16" height="16" viewBox="0 0 16 16"><path d="M4.4,8.3 L6.9,10.7 L11.7,5.7" fill="none" stroke="#e4eef9" stroke-width="1.05" stroke-linecap="round" stroke-linejoin="round"/></svg>
<div style="left:1352px;top:301px;width:16px;height:16px;background:#0063c1;border-radius:4px"></div>
<svg style="position:absolute;left:1352px;top:301px;" width="16" height="16" viewBox="0 0 16 16"><path d="M4.4,8.3 L6.9,10.7 L11.7,5.7" fill="none" stroke="#e4eef9" stroke-width="1.05" stroke-linecap="round" stroke-linejoin="round"/></svg>
<div class="t" style="left:1407px;top:303.46px;font-size:16px;line-height:16px;transform:scaleX(0.96);transform-origin:0 0;color:#111">100.00</div>
<div style="left:1536px;top:301px;width:16px;height:16px;background:#f3f3f3;border:2px solid #858585;border-radius:4px"></div>
<div style="left:6px;top:323px;width:49px;height:27px;background:#fff"></div>
<div style="left:8px;top:350px;width:47px;height:1px;background:#e6e6e6"></div>
<div style="left:56px;top:323px;width:1799px;height:27px;background:#ffffff"></div>
<div style="left:55px;top:350px;width:1800px;height:1px;background:#a5a5a5"></div>
<div style="left:55px;top:322px;width:1px;height:29px;background:#a5a5a5"></div>
<div style="left:140px;top:322px;width:1px;height:29px;background:#a5a5a5"></div>
<div style="left:194px;top:322px;width:1px;height:29px;background:#a5a5a5"></div>
<div style="left:579px;top:322px;width:1px;height:29px;background:#a5a5a5"></div>
<div style="left:765px;top:322px;width:1px;height:29px;background:#a5a5a5"></div>
<div style="left:861px;top:322px;width:1px;height:29px;background:#a5a5a5"></div>
<div style="left:1105px;top:322px;width:1px;height:29px;background:#a5a5a5"></div>
<div style="left:1163px;top:322px;width:1px;height:29px;background:#a5a5a5"></div>
<div style="left:1231px;top:322px;width:1px;height:29px;background:#a5a5a5"></div>
<div style="left:1320px;top:322px;width:1px;height:29px;background:#a5a5a5"></div>
<div style="left:1401px;top:322px;width:1px;height:29px;background:#a5a5a5"></div>
<div style="left:1509px;top:322px;width:1px;height:29px;background:#a5a5a5"></div>
<div style="left:1580px;top:322px;width:1px;height:29px;background:#a5a5a5"></div>
<div style="left:1685px;top:322px;width:1px;height:29px;background:#a5a5a5"></div>
<div style="left:1784px;top:322px;width:1px;height:29px;background:#a5a5a5"></div>
<div class="t" style="left:60px;top:330.46px;font-size:16px;line-height:16px;transform:scaleX(0.96);transform-origin:0 0;color:#111">90791</div>
<div style="left:159px;top:328px;width:16px;height:16px;background:#0063c1;border-radius:4px"></div>
<svg style="position:absolute;left:159px;top:328px;" width="16" height="16" viewBox="0 0 16 16"><path d="M4.4,8.3 L6.9,10.7 L11.7,5.7" fill="none" stroke="#e4eef9" stroke-width="1.05" stroke-linecap="round" stroke-linejoin="round"/></svg>
<div class="t" style="left:199px;top:330.46px;font-size:16px;line-height:16px;transform:scaleX(0.96);transform-origin:0 0;color:#111">Psychiatric Diagnostic Eval.  (No Med. Service)</div>
<div style="left:580px;top:323px;width:185px;height:27px;background:#fff;border:2px solid #3a8edb;border-bottom-color:#1a7fd4"></div>
<div class="t" style="left:584px;top:330.96px;font-size:16px;line-height:16px;transform:scaleX(0.96);transform-origin:0 0;color:#111">CPT General</div>
<svg style="position:absolute;left:749px;top:333.42px;" width="11" height="7" viewBox="0 0 11 7"><path d="M0.7,0.9 L5.5,5.5 L10.3,0.9" fill="none" stroke="#5c5c5c" stroke-width="1.2"/></svg>
<div style="left:862px;top:323px;width:243px;height:27px;background:#fff;border:2px solid #3a8edb;border-bottom-color:#1a7fd4"></div>
<svg style="position:absolute;left:1089px;top:333.42px;" width="11" height="7" viewBox="0 0 11 7"><path d="M0.7,0.9 L5.5,5.5 L10.3,0.9" fill="none" stroke="#5c5c5c" stroke-width="1.2"/></svg>
<div style="left:1126px;top:328px;width:16px;height:16px;background:#0063c1;border-radius:4px"></div>
<svg style="position:absolute;left:1126px;top:328px;" width="16" height="16" viewBox="0 0 16 16"><path d="M4.4,8.3 L6.9,10.7 L11.7,5.7" fill="none" stroke="#e4eef9" stroke-width="1.05" stroke-linecap="round" stroke-linejoin="round"/></svg>
<div style="left:1164px;top:323px;width:67px;height:27px;background:#fff;border:2px solid #3a8edb;border-bottom-color:#1a7fd4"></div>
<svg style="position:absolute;left:1215px;top:333.42px;" width="11" height="7" viewBox="0 0 11 7"><path d="M0.7,0.9 L5.5,5.5 L10.3,0.9" fill="none" stroke="#5c5c5c" stroke-width="1.2"/></svg>
<div style="left:1268px;top:328px;width:16px;height:16px;background:#f3f3f3;border:2px solid #858585;border-radius:4px"></div>
<div style="left:1352px;top:328px;width:16px;height:16px;background:#0063c1;border-radius:4px"></div>
<svg style="position:absolute;left:1352px;top:328px;" width="16" height="16" viewBox="0 0 16 16"><path d="M4.4,8.3 L6.9,10.7 L11.7,5.7" fill="none" stroke="#e4eef9" stroke-width="1.05" stroke-linecap="round" stroke-linejoin="round"/></svg>
<div class="t" style="left:1407px;top:330.46px;font-size:16px;line-height:16px;transform:scaleX(0.96);transform-origin:0 0;color:#111">1.00</div>
<div style="left:1536px;top:328px;width:16px;height:16px;background:#f3f3f3;border:2px solid #858585;border-radius:4px"></div>
<div style="left:6px;top:351px;width:49px;height:26px;background:#fff"></div>
<div style="left:8px;top:377px;width:47px;height:1px;background:#e6e6e6"></div>
<div style="left:56px;top:351px;width:1799px;height:26px;background:#cccccc"></div>
<div style="left:55px;top:377px;width:1800px;height:1px;background:#a5a5a5"></div>
<div style="left:55px;top:350px;width:1px;height:28px;background:#a5a5a5"></div>
<div style="left:140px;top:350px;width:1px;height:28px;background:#a5a5a5"></div>
<div style="left:194px;top:350px;width:1px;height:28px;background:#a5a5a5"></div>
<div style="left:579px;top:350px;width:1px;height:28px;background:#a5a5a5"></div>
<div style="left:765px;top:350px;width:1px;height:28px;background:#a5a5a5"></div>
<div style="left:861px;top:350px;width:1px;height:28px;background:#a5a5a5"></div>
<div style="left:1105px;top:350px;width:1px;height:28px;background:#a5a5a5"></div>
<div style="left:1163px;top:350px;width:1px;height:28px;background:#a5a5a5"></div>
<div style="left:1231px;top:350px;width:1px;height:28px;background:#a5a5a5"></div>
<div style="left:1320px;top:350px;width:1px;height:28px;background:#a5a5a5"></div>
<div style="left:1401px;top:350px;width:1px;height:28px;background:#a5a5a5"></div>
<div style="left:1509px;top:350px;width:1px;height:28px;background:#a5a5a5"></div>
<div style="left:1580px;top:350px;width:1px;height:28px;background:#a5a5a5"></div>
<div style="left:1685px;top:350px;width:1px;height:28px;background:#a5a5a5"></div>
<div style="left:1784px;top:350px;width:1px;height:28px;background:#a5a5a5"></div>
<div class="t" style="left:60px;top:358.46px;font-size:16px;line-height:16px;transform:scaleX(0.96);transform-origin:0 0;color:#111">90792</div>
<div style="left:159px;top:356px;width:16px;height:16px;background:#0063c1;border-radius:4px"></div>
<svg style="position:absolute;left:159px;top:356px;" width="16" height="16" viewBox="0 0 16 16"><path d="M4.4,8.3 L6.9,10.7 L11.7,5.7" fill="none" stroke="#e4eef9" stroke-width="1.05" stroke-linecap="round" stroke-linejoin="round"/></svg>
<div class="t" style="left:199px;top:358.46px;font-size:16px;line-height:16px;transform:scaleX(0.96);transform-origin:0 0;color:#111">Psychiatric Diagnostic Eval.  (With Med. Service)</div>
<div style="left:580px;top:351px;width:185px;height:26px;background:#fff;border:2px solid #3a8edb;border-bottom-color:#1a7fd4"></div>
<div class="t" style="left:584px;top:358.46px;font-size:16px;line-height:16px;transform:scaleX(0.96);transform-origin:0 0;color:#111">CPT General</div>
<svg style="position:absolute;left:749px;top:361.0px;" width="11" height="7" viewBox="0 0 11 7"><path d="M0.7,0.9 L5.5,5.5 L10.3,0.9" fill="none" stroke="#5c5c5c" stroke-width="1.2"/></svg>
<div style="left:862px;top:351px;width:243px;height:26px;background:#fff;border:2px solid #3a8edb;border-bottom-color:#1a7fd4"></div>
<svg style="position:absolute;left:1089px;top:361.0px;" width="11" height="7" viewBox="0 0 11 7"><path d="M0.7,0.9 L5.5,5.5 L10.3,0.9" fill="none" stroke="#5c5c5c" stroke-width="1.2"/></svg>
<div style="left:1126px;top:356px;width:16px;height:16px;background:#0063c1;border-radius:4px"></div>
<svg style="position:absolute;left:1126px;top:356px;" width="16" height="16" viewBox="0 0 16 16"><path d="M4.4,8.3 L6.9,10.7 L11.7,5.7" fill="none" stroke="#e4eef9" stroke-width="1.05" stroke-linecap="round" stroke-linejoin="round"/></svg>
<div style="left:1164px;top:351px;width:67px;height:26px;background:#fff;border:2px solid #3a8edb;border-bottom-color:#1a7fd4"></div>
<svg style="position:absolute;left:1215px;top:361.0px;" width="11" height="7" viewBox="0 0 11 7"><path d="M0.7,0.9 L5.5,5.5 L10.3,0.9" fill="none" stroke="#5c5c5c" stroke-width="1.2"/></svg>
<div style="left:1268px;top:356px;width:16px;height:16px;background:#f3f3f3;border:2px solid #858585;border-radius:4px"></div>
<div style="left:1352px;top:356px;width:16px;height:16px;background:#0063c1;border-radius:4px"></div>
<svg style="position:absolute;left:1352px;top:356px;" width="16" height="16" viewBox="0 0 16 16"><path d="M4.4,8.3 L6.9,10.7 L11.7,5.7" fill="none" stroke="#e4eef9" stroke-width="1.05" stroke-linecap="round" stroke-linejoin="round"/></svg>
<div class="t" style="left:1407px;top:358.46px;font-size:16px;line-height:16px;transform:scaleX(0.96);transform-origin:0 0;color:#111">1.00</div>
<div style="left:1536px;top:356px;width:16px;height:16px;background:#f3f3f3;border:2px solid #858585;border-radius:4px"></div>
<div style="left:6px;top:378px;width:49px;height:27px;background:#fff"></div>
<div style="left:8px;top:405px;width:47px;height:1px;background:#e6e6e6"></div>
<div style="left:56px;top:378px;width:1799px;height:27px;background:#ffffff"></div>
<div style="left:55px;top:405px;width:1800px;height:1px;background:#a5a5a5"></div>
<div style="left:55px;top:377px;width:1px;height:29px;background:#a5a5a5"></div>
<div style="left:140px;top:377px;width:1px;height:29px;background:#a5a5a5"></div>
<div style="left:194px;top:377px;width:1px;height:29px;background:#a5a5a5"></div>
<div style="left:579px;top:377px;width:1px;height:29px;background:#a5a5a5"></div>
<div style="left:765px;top:377px;width:1px;height:29px;background:#a5a5a5"></div>
<div style="left:861px;top:377px;width:1px;height:29px;background:#a5a5a5"></div>
<div style="left:1105px;top:377px;width:1px;height:29px;background:#a5a5a5"></div>
<div style="left:1163px;top:377px;width:1px;height:29px;background:#a5a5a5"></div>
<div style="left:1231px;top:377px;width:1px;height:29px;background:#a5a5a5"></div>
<div style="left:1320px;top:377px;width:1px;height:29px;background:#a5a5a5"></div>
<div style="left:1401px;top:377px;width:1px;height:29px;background:#a5a5a5"></div>
<div style="left:1509px;top:377px;width:1px;height:29px;background:#a5a5a5"></div>
<div style="left:1580px;top:377px;width:1px;height:29px;background:#a5a5a5"></div>
<div style="left:1685px;top:377px;width:1px;height:29px;background:#a5a5a5"></div>
<div style="left:1784px;top:377px;width:1px;height:29px;background:#a5a5a5"></div>
<div class="t" style="left:60px;top:385.46px;font-size:16px;line-height:16px;transform:scaleX(0.96);transform-origin:0 0;color:#111">90832</div>
<div style="left:159px;top:383px;width:16px;height:16px;background:#0063c1;border-radius:4px"></div>
<svg style="position:absolute;left:159px;top:383px;" width="16" height="16" viewBox="0 0 16 16"><path d="M4.4,8.3 L6.9,10.7 L11.7,5.7" fill="none" stroke="#e4eef9" stroke-width="1.05" stroke-linecap="round" stroke-linejoin="round"/></svg>
<div class="t" style="left:199px;top:385.46px;font-size:16px;line-height:16px;transform:scaleX(0.96);transform-origin:0 0;color:#111">Psychotherapy 30 min.</div>
<div style="left:580px;top:378px;width:185px;height:27px;background:#fff;border:2px solid #3a8edb;border-bottom-color:#1a7fd4"></div>
<div class="t" style="left:584px;top:385.96px;font-size:16px;line-height:16px;transform:scaleX(0.96);transform-origin:0 0;color:#111">CPT General</div>
<svg style="position:absolute;left:749px;top:388.42px;" width="11" height="7" viewBox="0 0 11 7"><path d="M0.7,0.9 L5.5,5.5 L10.3,0.9" fill="none" stroke="#5c5c5c" stroke-width="1.2"/></svg>
<div style="left:862px;top:378px;width:243px;height:27px;background:#fff;border:2px solid #3a8edb;border-bottom-color:#1a7fd4"></div>
<div class="t" style="left:866px;top:385.96px;font-size:16px;line-height:16px;transform:scaleX(0.96);transform-origin:0 0;color:#111">OPT</div>
<svg style="position:absolute;left:1089px;top:388.42px;" width="11" height="7" viewBox="0 0 11 7"><path d="M0.7,0.9 L5.5,5.5 L10.3,0.9" fill="none" stroke="#5c5c5c" stroke-width="1.2"/></svg>
<div style="left:1126px;top:383px;width:16px;height:16px;background:#0063c1;border-radius:4px"></div>
<svg style="position:absolute;left:1126px;top:383px;" width="16" height="16" viewBox="0 0 16 16"><path d="M4.4,8.3 L6.9,10.7 L11.7,5.7" fill="none" stroke="#e4eef9" stroke-width="1.05" stroke-linecap="round" stroke-linejoin="round"/></svg>
<div style="left:1164px;top:378px;width:67px;height:27px;background:#fff;border:2px solid #3a8edb;border-bottom-color:#1a7fd4"></div>
<svg style="position:absolute;left:1215px;top:388.42px;" width="11" height="7" viewBox="0 0 11 7"><path d="M0.7,0.9 L5.5,5.5 L10.3,0.9" fill="none" stroke="#5c5c5c" stroke-width="1.2"/></svg>
<div style="left:1268px;top:383px;width:16px;height:16px;background:#f3f3f3;border:2px solid #858585;border-radius:4px"></div>
<div style="left:1352px;top:383px;width:16px;height:16px;background:#0063c1;border-radius:4px"></div>
<svg style="position:absolute;left:1352px;top:383px;" width="16" height="16" viewBox="0 0 16 16"><path d="M4.4,8.3 L6.9,10.7 L11.7,5.7" fill="none" stroke="#e4eef9" stroke-width="1.05" stroke-linecap="round" stroke-linejoin="round"/></svg>
<div class="t" style="left:1407px;top:385.46px;font-size:16px;line-height:16px;transform:scaleX(0.96);transform-origin:0 0;color:#111">26.00</div>
<div style="left:1536px;top:383px;width:16px;height:16px;background:#f3f3f3;border:2px solid #858585;border-radius:4px"></div>
<div style="left:6px;top:406px;width:49px;height:26px;background:#fff"></div>
<div style="left:8px;top:432px;width:47px;height:1px;background:#e6e6e6"></div>
<div style="left:56px;top:406px;width:1799px;height:26px;background:#cccccc"></div>
<div style="left:55px;top:432px;width:1800px;height:1px;background:#a5a5a5"></div>
<div style="left:55px;top:405px;width:1px;height:28px;background:#a5a5a5"></div>
<div style="left:140px;top:405px;width:1px;height:28px;background:#a5a5a5"></div>
<div style="left:194px;top:405px;width:1px;height:28px;background:#a5a5a5"></div>
<div style="left:579px;top:405px;width:1px;height:28px;background:#a5a5a5"></div>
<div style="left:765px;top:405px;width:1px;height:28px;background:#a5a5a5"></div>
<div style="left:861px;top:405px;width:1px;height:28px;background:#a5a5a5"></div>
<div style="left:1105px;top:405px;width:1px;height:28px;background:#a5a5a5"></div>
<div style="left:1163px;top:405px;width:1px;height:28px;background:#a5a5a5"></div>
<div style="left:1231px;top:405px;width:1px;height:28px;background:#a5a5a5"></div>
<div style="left:1320px;top:405px;width:1px;height:28px;background:#a5a5a5"></div>
<div style="left:1401px;top:405px;width:1px;height:28px;background:#a5a5a5"></div>
<div style="left:1509px;top:405px;width:1px;height:28px;background:#a5a5a5"></div>
<div style="left:1580px;top:405px;width:1px;height:28px;background:#a5a5a5"></div>
<div style="left:1685px;top:405px;width:1px;height:28px;background:#a5a5a5"></div>
<div style="left:1784px;top:405px;width:1px;height:28px;background:#a5a5a5"></div>
<div class="t" style="left:60px;top:413.46px;font-size:16px;line-height:16px;transform:scaleX(0.96);transform-origin:0 0;color:#111">90833</div>
<div style="left:159px;top:411px;width:16px;height:16px;background:#0063c1;border-radius:4px"></div>
<svg style="position:absolute;left:159px;top:411px;" width="16" height="16" viewBox="0 0 16 16"><path d="M4.4,8.3 L6.9,10.7 L11.7,5.7" fill="none" stroke="#e4eef9" stroke-width="1.05" stroke-linecap="round" stroke-linejoin="round"/></svg>
<div class="t" style="left:199px;top:413.46px;font-size:16px;line-height:16px;transform:scaleX(0.96);transform-origin:0 0;color:#111">Psychotherapy Add On 30 min.</div>
<div style="left:580px;top:406px;width:185px;height:26px;background:#fff;border:2px solid #3a8edb;border-bottom-color:#1a7fd4"></div>
<div class="t" style="left:584px;top:413.46px;font-size:16px;line-height:16px;transform:scaleX(0.96);transform-origin:0 0;color:#111">CPT Add Ons</div>
<svg style="position:absolute;left:749px;top:416.0px;" width="11" height="7" viewBox="0 0 11 7"><path d="M0.7,0.9 L5.5,5.5 L10.3,0.9" fill="none" stroke="#5c5c5c" stroke-width="1.2"/></svg>
<div style="left:862px;top:406px;width:243px;height:26px;background:#fff;border:2px solid #3a8edb;border-bottom-color:#1a7fd4"></div>
<svg style="position:absolute;left:1089px;top:416.0px;" width="11" height="7" viewBox="0 0 11 7"><path d="M0.7,0.9 L5.5,5.5 L10.3,0.9" fill="none" stroke="#5c5c5c" stroke-width="1.2"/></svg>
<div style="left:1126px;top:411px;width:16px;height:16px;background:#0063c1;border-radius:4px"></div>
<svg style="position:absolute;left:1126px;top:411px;" width="16" height="16" viewBox="0 0 16 16"><path d="M4.4,8.3 L6.9,10.7 L11.7,5.7" fill="none" stroke="#e4eef9" stroke-width="1.05" stroke-linecap="round" stroke-linejoin="round"/></svg>
<div style="left:1164px;top:406px;width:67px;height:26px;background:#fff;border:2px solid #3a8edb;border-bottom-color:#1a7fd4"></div>
<svg style="position:absolute;left:1215px;top:416.0px;" width="11" height="7" viewBox="0 0 11 7"><path d="M0.7,0.9 L5.5,5.5 L10.3,0.9" fill="none" stroke="#5c5c5c" stroke-width="1.2"/></svg>
<div style="left:1268px;top:411px;width:16px;height:16px;background:#f3f3f3;border:2px solid #858585;border-radius:4px"></div>
<div style="left:1352px;top:411px;width:16px;height:16px;background:#0063c1;border-radius:4px"></div>
<svg style="position:absolute;left:1352px;top:411px;" width="16" height="16" viewBox="0 0 16 16"><path d="M4.4,8.3 L6.9,10.7 L11.7,5.7" fill="none" stroke="#e4eef9" stroke-width="1.05" stroke-linecap="round" stroke-linejoin="round"/></svg>
<div class="t" style="left:1407px;top:413.46px;font-size:16px;line-height:16px;transform:scaleX(0.96);transform-origin:0 0;color:#111">26.00</div>
<div style="left:1536px;top:411px;width:16px;height:16px;background:#f3f3f3;border:2px solid #858585;border-radius:4px"></div>
<div style="left:6px;top:433px;width:49px;height:27px;background:#fff"></div>
<div style="left:8px;top:460px;width:47px;height:1px;background:#e6e6e6"></div>
<div style="left:56px;top:433px;width:1799px;height:27px;background:#ffffff"></div>
<div style="left:55px;top:460px;width:1800px;height:1px;background:#a5a5a5"></div>
<div style="left:55px;top:432px;width:1px;height:29px;background:#a5a5a5"></div>
<div style="left:140px;top:432px;width:1px;height:29px;background:#a5a5a5"></div>
<div style="left:194px;top:432px;width:1px;height:29px;background:#a5a5a5"></div>
<div style="left:579px;top:432px;width:1px;height:29px;background:#a5a5a5"></div>
<div style="left:765px;top:432px;width:1px;height:29px;background:#a5a5a5"></div>
<div style="left:861px;top:432px;width:1px;height:29px;background:#a5a5a5"></div>
<div style="left:1105px;top:432px;width:1px;height:29px;background:#a5a5a5"></div>
<div style="left:1163px;top:432px;width:1px;height:29px;background:#a5a5a5"></div>
<div style="left:1231px;top:432px;width:1px;height:29px;background:#a5a5a5"></div>
<div style="left:1320px;top:432px;width:1px;height:29px;background:#a5a5a5"></div>
<div style="left:1401px;top:432px;width:1px;height:29px;background:#a5a5a5"></div>
<div style="left:1509px;top:432px;width:1px;height:29px;background:#a5a5a5"></div>
<div style="left:1580px;top:432px;width:1px;height:29px;background:#a5a5a5"></div>
<div style="left:1685px;top:432px;width:1px;height:29px;background:#a5a5a5"></div>
<div style="left:1784px;top:432px;width:1px;height:29px;background:#a5a5a5"></div>
<div class="t" style="left:60px;top:440.46px;font-size:16px;line-height:16px;transform:scaleX(0.96);transform-origin:0 0;color:#111">90834</div>
<div style="left:159px;top:438px;width:16px;height:16px;background:#0063c1;border-radius:4px"></div>
<svg style="position:absolute;left:159px;top:438px;" width="16" height="16" viewBox="0 0 16 16"><path d="M4.4,8.3 L6.9,10.7 L11.7,5.7" fill="none" stroke="#e4eef9" stroke-width="1.05" stroke-linecap="round" stroke-linejoin="round"/></svg>
<div class="t" style="left:199px;top:440.46px;font-size:16px;line-height:16px;transform:scaleX(0.96);transform-origin:0 0;color:#111">Psychotherapy 45 min.</div>
<div style="left:580px;top:433px;width:185px;height:27px;background:#fff;border:2px solid #3a8edb;border-bottom-color:#1a7fd4"></div>
<div class="t" style="left:584px;top:440.96px;font-size:16px;line-height:16px;transform:scaleX(0.96);transform-origin:0 0;color:#111">CPT General</div>
<svg style="position:absolute;left:749px;top:443.42px;" width="11" height="7" viewBox="0 0 11 7"><path d="M0.7,0.9 L5.5,5.5 L10.3,0.9" fill="none" stroke="#5c5c5c" stroke-width="1.2"/></svg>
<div style="left:862px;top:433px;width:243px;height:27px;background:#fff;border:2px solid #3a8edb;border-bottom-color:#1a7fd4"></div>
<div class="t" style="left:866px;top:440.96px;font-size:16px;line-height:16px;transform:scaleX(0.96);transform-origin:0 0;color:#111">OPT</div>
<svg style="position:absolute;left:1089px;top:443.42px;" width="11" height="7" viewBox="0 0 11 7"><path d="M0.7,0.9 L5.5,5.5 L10.3,0.9" fill="none" stroke="#5c5c5c" stroke-width="1.2"/></svg>
<div style="left:1126px;top:438px;width:16px;height:16px;background:#0063c1;border-radius:4px"></div>
<svg style="position:absolute;left:1126px;top:438px;" width="16" height="16" viewBox="0 0 16 16"><path d="M4.4,8.3 L6.9,10.7 L11.7,5.7" fill="none" stroke="#e4eef9" stroke-width="1.05" stroke-linecap="round" stroke-linejoin="round"/></svg>
<div style="left:1164px;top:433px;width:67px;height:27px;background:#fff;border:2px solid #3a8edb;border-bottom-color:#1a7fd4"></div>
<svg style="position:absolute;left:1215px;top:443.42px;" width="11" height="7" viewBox="0 0 11 7"><path d="M0.7,0.9 L5.5,5.5 L10.3,0.9" fill="none" stroke="#5c5c5c" stroke-width="1.2"/></svg>
<div style="left:1268px;top:438px;width:16px;height:16px;background:#f3f3f3;border:2px solid #858585;border-radius:4px"></div>
<div style="left:1352px;top:438px;width:16px;height:16px;background:#0063c1;border-radius:4px"></div>
<svg style="position:absolute;left:1352px;top:438px;" width="16" height="16" viewBox="0 0 16 16"><path d="M4.4,8.3 L6.9,10.7 L11.7,5.7" fill="none" stroke="#e4eef9" stroke-width="1.05" stroke-linecap="round" stroke-linejoin="round"/></svg>
<div class="t" style="left:1407px;top:440.46px;font-size:16px;line-height:16px;transform:scaleX(0.96);transform-origin:0 0;color:#111">26.00</div>
<div style="left:1536px;top:438px;width:16px;height:16px;background:#f3f3f3;border:2px solid #858585;border-radius:4px"></div>
<div style="left:6px;top:461px;width:49px;height:26px;background:#fff"></div>
<div style="left:8px;top:487px;width:47px;height:1px;background:#e6e6e6"></div>
<div style="left:56px;top:461px;width:1799px;height:26px;background:#cccccc"></div>
<div style="left:55px;top:487px;width:1800px;height:1px;background:#a5a5a5"></div>
<div style="left:55px;top:460px;width:1px;height:28px;background:#a5a5a5"></div>
<div style="left:140px;top:460px;width:1px;height:28px;background:#a5a5a5"></div>
<div style="left:194px;top:460px;width:1px;height:28px;background:#a5a5a5"></div>
<div style="left:579px;top:460px;width:1px;height:28px;background:#a5a5a5"></div>
<div style="left:765px;top:460px;width:1px;height:28px;background:#a5a5a5"></div>
<div style="left:861px;top:460px;width:1px;height:28px;background:#a5a5a5"></div>
<div style="left:1105px;top:460px;width:1px;height:28px;background:#a5a5a5"></div>
<div style="left:1163px;top:460px;width:1px;height:28px;background:#a5a5a5"></div>
<div style="left:1231px;top:460px;width:1px;height:28px;background:#a5a5a5"></div>
<div style="left:1320px;top:460px;width:1px;height:28px;background:#a5a5a5"></div>
<div style="left:1401px;top:460px;width:1px;height:28px;background:#a5a5a5"></div>
<div style="left:1509px;top:460px;width:1px;height:28px;background:#a5a5a5"></div>
<div style="left:1580px;top:460px;width:1px;height:28px;background:#a5a5a5"></div>
<div style="left:1685px;top:460px;width:1px;height:28px;background:#a5a5a5"></div>
<div style="left:1784px;top:460px;width:1px;height:28px;background:#a5a5a5"></div>
<div class="t" style="left:60px;top:468.46px;font-size:16px;line-height:16px;transform:scaleX(0.96);transform-origin:0 0;color:#111">90836</div>
<div style="left:159px;top:466px;width:16px;height:16px;background:#0063c1;border-radius:4px"></div>
<svg style="position:absolute;left:159px;top:466px;" width="16" height="16" viewBox="0 0 16 16"><path d="M4.4,8.3 L6.9,10.7 L11.7,5.7" fill="none" stroke="#e4eef9" stroke-width="1.05" stroke-linecap="round" stroke-linejoin="round"/></svg>
<div class="t" style="left:199px;top:468.46px;font-size:16px;line-height:16px;transform:scaleX(0.96);transform-origin:0 0;color:#111">Psychotherapy Add On 45 min.</div>
<div style="left:580px;top:461px;width:185px;height:26px;background:#fff;border:2px solid #3a8edb;border-bottom-color:#1a7fd4"></div>
<div class="t" style="left:584px;top:468.46px;font-size:16px;line-height:16px;transform:scaleX(0.96);transform-origin:0 0;color:#111">CPT Add Ons</div>
<svg style="position:absolute;left:749px;top:471.0px;" width="11" height="7" viewBox="0 0 11 7"><path d="M0.7,0.9 L5.5,5.5 L10.3,0.9" fill="none" stroke="#5c5c5c" stroke-width="1.2"/></svg>
<div style="left:862px;top:461px;width:243px;height:26px;background:#fff;border:2px solid #3a8edb;border-bottom-color:#1a7fd4"></div>
<svg style="position:absolute;left:1089px;top:471.0px;" width="11" height="7" viewBox="0 0 11 7"><path d="M0.7,0.9 L5.5,5.5 L10.3,0.9" fill="none" stroke="#5c5c5c" stroke-width="1.2"/></svg>
<div style="left:1126px;top:466px;width:16px;height:16px;background:#0063c1;border-radius:4px"></div>
<svg style="position:absolute;left:1126px;top:466px;" width="16" height="16" viewBox="0 0 16 16"><path d="M4.4,8.3 L6.9,10.7 L11.7,5.7" fill="none" stroke="#e4eef9" stroke-width="1.05" stroke-linecap="round" stroke-linejoin="round"/></svg>
<div style="left:1164px;top:461px;width:67px;height:26px;background:#fff;border:2px solid #3a8edb;border-bottom-color:#1a7fd4"></div>
<svg style="position:absolute;left:1215px;top:471.0px;" width="11" height="7" viewBox="0 0 11 7"><path d="M0.7,0.9 L5.5,5.5 L10.3,0.9" fill="none" stroke="#5c5c5c" stroke-width="1.2"/></svg>
<div style="left:1268px;top:466px;width:16px;height:16px;background:#f3f3f3;border:2px solid #858585;border-radius:4px"></div>
<div style="left:1352px;top:466px;width:16px;height:16px;background:#0063c1;border-radius:4px"></div>
<svg style="position:absolute;left:1352px;top:466px;" width="16" height="16" viewBox="0 0 16 16"><path d="M4.4,8.3 L6.9,10.7 L11.7,5.7" fill="none" stroke="#e4eef9" stroke-width="1.05" stroke-linecap="round" stroke-linejoin="round"/></svg>
<div class="t" style="left:1407px;top:468.46px;font-size:16px;line-height:16px;transform:scaleX(0.96);transform-origin:0 0;color:#111">26.00</div>
<div style="left:1536px;top:466px;width:16px;height:16px;background:#f3f3f3;border:2px solid #858585;border-radius:4px"></div>
<div style="left:6px;top:488px;width:49px;height:27px;background:#fff"></div>
<div style="left:8px;top:488px;width:47px;height:27px;background:#bcdcf2"></div>
<div style="left:8px;top:515px;width:47px;height:1px;background:#e6e6e6"></div>
<div style="left:56px;top:488px;width:1799px;height:27px;background:#88a392"></div>
<div style="left:55px;top:515px;width:1800px;height:1px;background:#a5a5a5"></div>
<div style="left:55px;top:487px;width:1px;height:29px;background:#a5a5a5"></div>
<div style="left:140px;top:487px;width:1px;height:29px;background:#a5a5a5"></div>
<div style="left:194px;top:487px;width:1px;height:29px;background:#a5a5a5"></div>
<div style="left:579px;top:487px;width:1px;height:29px;background:#a5a5a5"></div>
<div style="left:765px;top:487px;width:1px;height:29px;background:#a5a5a5"></div>
<div style="left:861px;top:487px;width:1px;height:29px;background:#a5a5a5"></div>
<div style="left:1105px;top:487px;width:1px;height:29px;background:#a5a5a5"></div>
<div style="left:1163px;top:487px;width:1px;height:29px;background:#a5a5a5"></div>
<div style="left:1231px;top:487px;width:1px;height:29px;background:#a5a5a5"></div>
<div style="left:1320px;top:487px;width:1px;height:29px;background:#a5a5a5"></div>
<div style="left:1401px;top:487px;width:1px;height:29px;background:#a5a5a5"></div>
<div style="left:1509px;top:487px;width:1px;height:29px;background:#a5a5a5"></div>
<div style="left:1580px;top:487px;width:1px;height:29px;background:#a5a5a5"></div>
<div style="left:1685px;top:487px;width:1px;height:29px;background:#a5a5a5"></div>
<div style="left:1784px;top:487px;width:1px;height:29px;background:#a5a5a5"></div>
<div class="t" style="left:60px;top:495.46px;font-size:16px;line-height:16px;transform:scaleX(0.96);transform-origin:0 0;color:#f2f2f2">90837</div>
<div style="left:159px;top:493px;width:16px;height:16px;background:#0063c1;border-radius:4px"></div>
<svg style="position:absolute;left:159px;top:493px;" width="16" height="16" viewBox="0 0 16 16"><path d="M4.4,8.3 L6.9,10.7 L11.7,5.7" fill="none" stroke="#e4eef9" stroke-width="1.05" stroke-linecap="round" stroke-linejoin="round"/></svg>
<div class="t" style="left:199px;top:495.46px;font-size:16px;line-height:16px;transform:scaleX(0.96);transform-origin:0 0;color:#f2f2f2">Psychotherapy 60 min.</div>
<div style="left:580px;top:488px;width:185px;height:27px;background:#fff;border:2px solid #3a8edb;border-bottom-color:#1a7fd4"></div>
<div class="t" style="left:584px;top:495.96px;font-size:16px;line-height:16px;transform:scaleX(0.96);transform-origin:0 0;color:#111">CPT General</div>
<svg style="position:absolute;left:749px;top:498.42px;" width="11" height="7" viewBox="0 0 11 7"><path d="M0.7,0.9 L5.5,5.5 L10.3,0.9" fill="none" stroke="#5c5c5c" stroke-width="1.2"/></svg>
<div style="left:862px;top:488px;width:243px;height:27px;background:#fff;border:2px solid #3a8edb;border-bottom-color:#1a7fd4"></div>
<div class="t" style="left:866px;top:495.96px;font-size:16px;line-height:16px;transform:scaleX(0.96);transform-origin:0 0;color:#111">OPT</div>
<svg style="position:absolute;left:1089px;top:498.42px;" width="11" height="7" viewBox="0 0 11 7"><path d="M0.7,0.9 L5.5,5.5 L10.3,0.9" fill="none" stroke="#5c5c5c" stroke-width="1.2"/></svg>
<div style="left:1126px;top:493px;width:16px;height:16px;background:#0063c1;border-radius:4px"></div>
<svg style="position:absolute;left:1126px;top:493px;" width="16" height="16" viewBox="0 0 16 16"><path d="M4.4,8.3 L6.9,10.7 L11.7,5.7" fill="none" stroke="#e4eef9" stroke-width="1.05" stroke-linecap="round" stroke-linejoin="round"/></svg>
<div style="left:1164px;top:488px;width:67px;height:27px;background:#fff;border:2px solid #3a8edb;border-bottom-color:#1a7fd4"></div>
<svg style="position:absolute;left:1215px;top:498.42px;" width="11" height="7" viewBox="0 0 11 7"><path d="M0.7,0.9 L5.5,5.5 L10.3,0.9" fill="none" stroke="#5c5c5c" stroke-width="1.2"/></svg>
<div style="left:1268px;top:493px;width:16px;height:16px;background:#f3f3f3;border:2px solid #858585;border-radius:4px"></div>
<div style="left:1352px;top:493px;width:16px;height:16px;background:#0063c1;border-radius:4px"></div>
<svg style="position:absolute;left:1352px;top:493px;" width="16" height="16" viewBox="0 0 16 16"><path d="M4.4,8.3 L6.9,10.7 L11.7,5.7" fill="none" stroke="#e4eef9" stroke-width="1.05" stroke-linecap="round" stroke-linejoin="round"/></svg>
<div class="t" style="left:1407px;top:495.46px;font-size:16px;line-height:16px;transform:scaleX(0.96);transform-origin:0 0;color:#f2f2f2">26.00</div>
<div style="left:1536px;top:493px;width:16px;height:16px;background:#f3f3f3;border:2px solid #858585;border-radius:4px"></div>
<svg style="position:absolute;left:8px;top:487px;overflow:visible" width="22" height="28" viewBox="8 487 22 28"><path d="M13.8,496.3 L21.6,502.6 L13.8,508.9 Z" fill="#404040"/></svg>
<div style="left:6px;top:516px;width:49px;height:26px;background:#fff"></div>
<div style="left:8px;top:542px;width:47px;height:1px;background:#e6e6e6"></div>
<div style="left:56px;top:516px;width:1799px;height:26px;background:#cccccc"></div>
<div style="left:55px;top:542px;width:1800px;height:1px;background:#a5a5a5"></div>
<div style="left:55px;top:515px;width:1px;height:28px;background:#a5a5a5"></div>
<div style="left:140px;top:515px;width:1px;height:28px;background:#a5a5a5"></div>
<div style="left:194px;top:515px;width:1px;height:28px;background:#a5a5a5"></div>
<div style="left:579px;top:515px;width:1px;height:28px;background:#a5a5a5"></div>
<div style="left:765px;top:515px;width:1px;height:28px;background:#a5a5a5"></div>
<div style="left:861px;top:515px;width:1px;height:28px;background:#a5a5a5"></div>
<div style="left:1105px;top:515px;width:1px;height:28px;background:#a5a5a5"></div>
<div style="left:1163px;top:515px;width:1px;height:28px;background:#a5a5a5"></div>
<div style="left:1231px;top:515px;width:1px;height:28px;background:#a5a5a5"></div>
<div style="left:1320px;top:515px;width:1px;height:28px;background:#a5a5a5"></div>
<div style="left:1401px;top:515px;width:1px;height:28px;background:#a5a5a5"></div>
<div style="left:1509px;top:515px;width:1px;height:28px;background:#a5a5a5"></div>
<div style="left:1580px;top:515px;width:1px;height:28px;background:#a5a5a5"></div>
<div style="left:1685px;top:515px;width:1px;height:28px;background:#a5a5a5"></div>
<div style="left:1784px;top:515px;width:1px;height:28px;background:#a5a5a5"></div>
<div class="t" style="left:60px;top:523.46px;font-size:16px;line-height:16px;transform:scaleX(0.96);transform-origin:0 0;color:#111">90838</div>
<div style="left:159px;top:521px;width:16px;height:16px;background:#0063c1;border-radius:4px"></div>
<svg style="position:absolute;left:159px;top:521px;" width="16" height="16" viewBox="0 0 16 16"><path d="M4.4,8.3 L6.9,10.7 L11.7,5.7" fill="none" stroke="#e4eef9" stroke-width="1.05" stroke-linecap="round" stroke-linejoin="round"/></svg>
<div class="t" style="left:199px;top:523.46px;font-size:16px;line-height:16px;transform:scaleX(0.96);transform-origin:0 0;color:#111">Psychotherapy Add On 60 min.</div>
<div style="left:580px;top:516px;width:185px;height:26px;background:#fff;border:2px solid #3a8edb;border-bottom-color:#1a7fd4"></div>
<div class="t" style="left:584px;top:523.46px;font-size:16px;line-height:16px;transform:scaleX(0.96);transform-origin:0 0;color:#111">CPT Add Ons</div>
<svg style="position:absolute;left:749px;top:526.0px;" width="11" height="7" viewBox="0 0 11 7"><path d="M0.7,0.9 L5.5,5.5 L10.3,0.9" fill="none" stroke="#5c5c5c" stroke-width="1.2"/></svg>
<div style="left:862px;top:516px;width:243px;height:26px;background:#fff;border:2px solid #3a8edb;border-bottom-color:#1a7fd4"></div>
<svg style="position:absolute;left:1089px;top:526.0px;" width="11" height="7" viewBox="0 0 11 7"><path d="M0.7,0.9 L5.5,5.5 L10.3,0.9" fill="none" stroke="#5c5c5c" stroke-width="1.2"/></svg>
<div style="left:1126px;top:521px;width:16px;height:16px;background:#0063c1;border-radius:4px"></div>
<svg style="position:absolute;left:1126px;top:521px;" width="16" height="16" viewBox="0 0 16 16"><path d="M4.4,8.3 L6.9,10.7 L11.7,5.7" fill="none" stroke="#e4eef9" stroke-width="1.05" stroke-linecap="round" stroke-linejoin="round"/></svg>
<div style="left:1164px;top:516px;width:67px;height:26px;background:#fff;border:2px solid #3a8edb;border-bottom-color:#1a7fd4"></div>
<svg style="position:absolute;left:1215px;top:526.0px;" width="11" height="7" viewBox="0 0 11 7"><path d="M0.7,0.9 L5.5,5.5 L10.3,0.9" fill="none" stroke="#5c5c5c" stroke-width="1.2"/></svg>
<div style="left:1268px;top:521px;width:16px;height:16px;background:#f3f3f3;border:2px solid #858585;border-radius:4px"></div>
<div style="left:1352px;top:521px;width:16px;height:16px;background:#0063c1;border-radius:4px"></div>
<svg style="position:absolute;left:1352px;top:521px;" width="16" height="16" viewBox="0 0 16 16"><path d="M4.4,8.3 L6.9,10.7 L11.7,5.7" fill="none" stroke="#e4eef9" stroke-width="1.05" stroke-linecap="round" stroke-linejoin="round"/></svg>
<div class="t" style="left:1407px;top:523.46px;font-size:16px;line-height:16px;transform:scaleX(0.96);transform-origin:0 0;color:#111">26.00</div>
<div style="left:1536px;top:521px;width:16px;height:16px;background:#f3f3f3;border:2px solid #858585;border-radius:4px"></div>
<div style="left:26px;top:553px;width:1294px;height:3px;background:#8c8c8c;border-radius:1.5px"></div>
<div style="left:0px;top:566px;width:1883px;height:151px;background:#f3f3f3"></div>
<div style="left:3px;top:576px;width:1874px;height:141px;background:#f6f6f6"></div>
<div style="left:2px;top:574px;width:1876px;height:1px;background:#7a7a7a"></div>
<div style="left:2px;top:575px;width:1876px;height:1px;background:#9a9a9a"></div>
<div style="left:2px;top:574px;width:1px;height:143px;background:#8a8a8a"></div>
<div style="left:3px;top:574px;width:1px;height:143px;background:#a8a8a8"></div>
<div style="left:1877px;top:574px;width:1px;height:143px;background:#d0d0d0"></div>
<div style="left:6px;top:576px;width:87px;height:26px;background:#9fbad2;border-radius:11px"></div>
<div class="t" style="left:32.4px;top:581.46px;font-size:16px;line-height:16px;color:#1a1a24;transform:scaleX(0.926);transform-origin:0 0">Save</div>
<svg style="position:absolute;left:95px;top:577.8px;overflow:visible" width="60" height="22.0" viewBox="95 577.8 60 22.0"><g fill="none" stroke="#2b2b2b" stroke-width="1.35" stroke-linejoin="miter" transform="translate(5,499.8)"><path d="M96.8,82.3 V95.9"/><path d="M111.2,82.7 V95.6 L100.4,89.1 Z"/><path d="M126.4,89 L134.7,82.5 L137.2,85.1 L140.9,82.5 V95.5 L137.2,93 L134.7,95.5 Z M137.2,85.1 L132.3,89 L137.2,93"/></g></svg>
<svg style="position:absolute;left:198px;top:577.8px;overflow:visible" width="56" height="22.0" viewBox="198 577.8 56 22.0"><g fill="none" stroke="#2b2b2b" stroke-width="1.35" stroke-linejoin="miter" transform="translate(-10,499.8)"><path d="M229.1,89 L220.8,82.5 L218.3,85.1 L214.6,82.5 V95.5 L218.3,93 L220.8,95.5 Z M218.3,85.1 L223.2,89 L218.3,93"/><path d="M244.5,82.7 V95.6 L255.1,89.1 Z"/><path d="M258.3,82.3 V95.9"/></g></svg>
<div class="t" style="left:157.9px;top:582.16px;font-size:16px;line-height:16px;transform:scaleX(0.82);transform-origin:0 0;color:#111">1 of 1</div>
<div style="left:259px;top:577px;width:89px;height:26px;background:#9fbad2;border-radius:11px"></div>
<div class="t" style="left:282.2px;top:582.46px;font-size:16px;line-height:16px;color:#1a1a24;transform:scaleX(0.843);transform-origin:0 0">Export</div>
<div style="left:1624px;top:576px;width:154px;height:26px;background:#9fbad2;border-radius:11px 0 0 11px"></div>
<div class="t" style="left:1649.5px;top:581.46px;font-size:16px;line-height:16px;color:#1a1a24;transform:scaleX(0.819);transform-origin:0 0">Additional Details</div>
<div style="left:1796px;top:577px;width:81px;height:26px;background:#9fbad2;border-radius:11px"></div>
<div class="t" style="left:1820.3px;top:582.46px;font-size:16px;line-height:16px;color:#1a1a24;transform:scaleX(0.833);transform-origin:0 0">Filter</div>
<div style="left:3px;top:604px;width:1875px;height:1px;background:#000"></div>
<div style="left:3px;top:605px;width:1875px;height:1px;background:#1e1e1e"></div>
<div style="left:3px;top:604px;width:1px;height:113px;background:#5a5a5a"></div>
<div style="left:4px;top:604px;width:1px;height:113px;background:#000"></div>
<div style="left:5px;top:604px;width:1px;height:113px;background:#1a1a1a"></div>
<div style="left:1876px;top:604px;width:1px;height:113px;background:#000"></div>
<div style="left:1877px;top:604px;width:1px;height:113px;background:#3a3a3a"></div>
<div style="left:6px;top:606px;width:1870px;height:111px;background:#fff"></div>
<div style="left:55px;top:606px;width:1px;height:45px;background:#b4b4b4"></div>
<div style="left:258px;top:606px;width:1px;height:45px;background:#e4e4e4"></div>
<div style="left:460px;top:606px;width:1px;height:45px;background:#e4e4e4"></div>
<div style="left:661px;top:606px;width:1px;height:45px;background:#e4e4e4"></div>
<div style="left:864px;top:606px;width:1px;height:45px;background:#e4e4e4"></div>
<div style="left:1066px;top:606px;width:1px;height:45px;background:#e4e4e4"></div>
<div style="left:1269px;top:606px;width:1px;height:45px;background:#e4e4e4"></div>
<div style="left:1471px;top:606px;width:1px;height:45px;background:#e4e4e4"></div>
<div style="left:1673px;top:606px;width:1px;height:45px;background:#e4e4e4"></div>
<div style="left:5px;top:651px;width:1870px;height:1px;background:#a5a5a5"></div>
<div class="t" style="left:65px;top:622.96px;font-size:16px;line-height:16px;transform:scaleX(0.96);transform-origin:0 0;color:#111">Start Date</div>
<div class="t" style="left:268px;top:622.96px;font-size:16px;line-height:16px;transform:scaleX(0.96);transform-origin:0 0;color:#111">End Date</div>
<div class="t" style="left:470px;top:613.63px;font-size:16px;line-height:16px;transform:scaleX(0.96);transform-origin:0 0;color:#111">Default Billing</div>
<div class="t" style="left:470px;top:632.28px;font-size:16px;line-height:16px;transform:scaleX(0.96);transform-origin:0 0;color:#111">Rate/Unit</div>
<div class="t" style="left:671px;top:622.96px;font-size:16px;line-height:16px;transform:scaleX(0.96);transform-origin:0 0;color:#111">Expected Amount/Unit</div>
<div class="t" style="left:873px;top:622.96px;font-size:16px;line-height:16px;transform:scaleX(0.96);transform-origin:0 0;color:#111">Auth. Decrement Action</div>
<div class="t" style="left:1076px;top:622.96px;font-size:16px;line-height:16px;transform:scaleX(0.96);transform-origin:0 0;color:#111">Billing Units Calc.</div>
<div class="t" style="left:1279px;top:613.63px;font-size:16px;line-height:16px;transform:scaleX(0.96);transform-origin:0 0;color:#111">Min Note Duration in</div>
<div class="t" style="left:1279px;top:632.28px;font-size:16px;line-height:16px;transform:scaleX(0.96);transform-origin:0 0;color:#111">Min.</div>
<div class="t" style="left:1481px;top:613.63px;font-size:16px;line-height:16px;transform:scaleX(0.96);transform-origin:0 0;color:#111">Max Note Duration in</div>
<div class="t" style="left:1481px;top:632.28px;font-size:16px;line-height:16px;transform:scaleX(0.96);transform-origin:0 0;color:#111">Min.</div>
<div class="t" style="left:1682px;top:622.96px;font-size:16px;line-height:16px;transform:scaleX(0.96);transform-origin:0 0;color:#111">Active</div>
<div style="left:8px;top:681px;width:47px;height:1px;background:#e6e6e6"></div>
<div style="left:56px;top:652px;width:1819px;height:29px;background:#cccccc"></div>
<div style="left:56px;top:652px;width:202px;height:29px;background:#88a392"></div>
<div style="left:55px;top:681px;width:1820px;height:1px;background:#a5a5a5"></div>
<div style="left:55px;top:651px;width:1px;height:31px;background:#a5a5a5"></div>
<div style="left:258px;top:651px;width:1px;height:31px;background:#a5a5a5"></div>
<div style="left:460px;top:651px;width:1px;height:31px;background:#a5a5a5"></div>
<div style="left:661px;top:651px;width:1px;height:31px;background:#a5a5a5"></div>
<div style="left:864px;top:651px;width:1px;height:31px;background:#a5a5a5"></div>
<div style="left:1066px;top:651px;width:1px;height:31px;background:#a5a5a5"></div>
<div style="left:1269px;top:651px;width:1px;height:31px;background:#a5a5a5"></div>
<div style="left:1471px;top:651px;width:1px;height:31px;background:#a5a5a5"></div>
<div style="left:1673px;top:651px;width:1px;height:31px;background:#a5a5a5"></div>
<div class="t" style="left:61px;top:660.46px;font-size:16px;line-height:16px;transform:scaleX(0.96);transform-origin:0 0;color:#f0f0f0">12/31/2022</div>
<div class="t" style="left:264px;top:660.46px;font-size:16px;line-height:16px;transform:scaleX(0.96);transform-origin:0 0;color:#111">12/31/2055</div>
<div class="t" style="left:466px;top:660.46px;font-size:16px;line-height:16px;transform:scaleX(0.96);transform-origin:0 0;color:#111">$250.00</div>
<div style="left:865px;top:652px;width:201px;height:29px;background:#fff;border:2px solid #3a8edb;border-bottom-color:#1a7fd4"></div>
<div class="t" style="left:869px;top:660.96px;font-size:16px;line-height:16px;transform:scaleX(0.96);transform-origin:0 0;color:#111">1 Unit / Note</div>
<svg style="position:absolute;left:1050px;top:663.26px;" width="11" height="7" viewBox="0 0 11 7"><path d="M0.7,0.9 L5.5,5.5 L10.3,0.9" fill="none" stroke="#5c5c5c" stroke-width="1.2"/></svg>
<div style="left:1068px;top:652px;width:201px;height:29px;background:#fff;border:2px solid #3a8edb;border-bottom-color:#1a7fd4"></div>
<svg style="position:absolute;left:1253px;top:663.26px;" width="11" height="7" viewBox="0 0 11 7"><path d="M0.7,0.9 L5.5,5.5 L10.3,0.9" fill="none" stroke="#5c5c5c" stroke-width="1.2"/></svg>
<div class="t" style="left:1274px;top:660.46px;font-size:16px;line-height:16px;transform:scaleX(0.96);transform-origin:0 0;color:#111">51</div>
<div class="t" style="left:1476px;top:660.46px;font-size:16px;line-height:16px;transform:scaleX(0.96);transform-origin:0 0;color:#111">69</div>
<div style="left:1766px;top:658px;width:16px;height:16px;background:#0063c1;border-radius:4px"></div>
<svg style="position:absolute;left:1766px;top:658px;" width="16" height="16" viewBox="0 0 16 16"><path d="M4.4,8.3 L6.9,10.7 L11.7,5.7" fill="none" stroke="#e4eef9" stroke-width="1.05" stroke-linecap="round" stroke-linejoin="round"/></svg>
<svg style="position:absolute;left:8px;top:651px;overflow:visible" width="22" height="30" viewBox="8 651 22 30"><path d="M13.9,661.7 L20.9,667.5 L13.9,673.3 Z" fill="#404040"/></svg>
<div style="left:8px;top:711px;width:47px;height:1px;background:#e6e6e6"></div>
<div style="left:56px;top:682px;width:1819px;height:29px;background:#fff"></div>
<div style="left:55px;top:711px;width:1820px;height:1px;background:#a5a5a5"></div>
<div style="left:55px;top:681px;width:1px;height:31px;background:#a5a5a5"></div>
<div style="left:258px;top:681px;width:1px;height:31px;background:#a5a5a5"></div>
<div style="left:460px;top:681px;width:1px;height:31px;background:#a5a5a5"></div>
<div style="left:661px;top:681px;width:1px;height:31px;background:#a5a5a5"></div>
<div style="left:864px;top:681px;width:1px;height:31px;background:#a5a5a5"></div>
<div style="left:1066px;top:681px;width:1px;height:31px;background:#a5a5a5"></div>
<div style="left:1269px;top:681px;width:1px;height:31px;background:#a5a5a5"></div>
<div style="left:1471px;top:681px;width:1px;height:31px;background:#a5a5a5"></div>
<div style="left:1673px;top:681px;width:1px;height:31px;background:#a5a5a5"></div>
<div class="t" style="left:61px;top:690.46px;font-size:16px;line-height:16px;transform:scaleX(0.96);transform-origin:0 0;color:#111">10/21/2025</div>
<div class="t" style="left:264px;top:690.46px;font-size:16px;line-height:16px;transform:scaleX(0.96);transform-origin:0 0;color:#111">10/21/2025</div>
<div class="t" style="left:466px;top:690.46px;font-size:16px;line-height:16px;transform:scaleX(0.96);transform-origin:0 0;color:#111"></div>
<div style="left:865px;top:682px;width:201px;height:29px;background:#fff;border:2px solid #3a8edb;border-bottom-color:#1a7fd4"></div>
<svg style="position:absolute;left:1050px;top:693.26px;" width="11" height="7" viewBox="0 0 11 7"><path d="M0.7,0.9 L5.5,5.5 L10.3,0.9" fill="none" stroke="#5c5c5c" stroke-width="1.2"/></svg>
<div style="left:1068px;top:682px;width:201px;height:29px;background:#fff;border:2px solid #3a8edb;border-bottom-color:#1a7fd4"></div>
<svg style="position:absolute;left:1253px;top:693.26px;" width="11" height="7" viewBox="0 0 11 7"><path d="M0.7,0.9 L5.5,5.5 L10.3,0.9" fill="none" stroke="#5c5c5c" stroke-width="1.2"/></svg>
<div class="t" style="left:1274px;top:690.46px;font-size:16px;line-height:16px;transform:scaleX(0.96);transform-origin:0 0;color:#111"></div>
<div class="t" style="left:1476px;top:690.46px;font-size:16px;line-height:16px;transform:scaleX(0.96);transform-origin:0 0;color:#111"></div>
<div style="left:1766px;top:688px;width:16px;height:16px;background:#f3f3f3;border:2px solid #858585;border-radius:4px"></div>
<svg style="position:absolute;left:10px;top:689px;overflow:visible" width="20" height="20" viewBox="10 689 20 20"><g stroke="#444" stroke-width="1.5" transform="translate(20.2,698.3)"><path d="M0,-3.4 V3.4 M-2.95,-1.7 L2.95,1.7 M-2.95,1.7 L2.95,-1.7"/></g><circle cx="20.2" cy="698.3" r="1.6" fill="#444"/></svg>
<div style="left:5px;top:712px;width:1870px;height:5px;background:#ababab"></div>
<div style="left:1617px;top:560px;width:165px;height:54px;border:7px solid #ffcc00;z-index:5"></div>
</body></html>
